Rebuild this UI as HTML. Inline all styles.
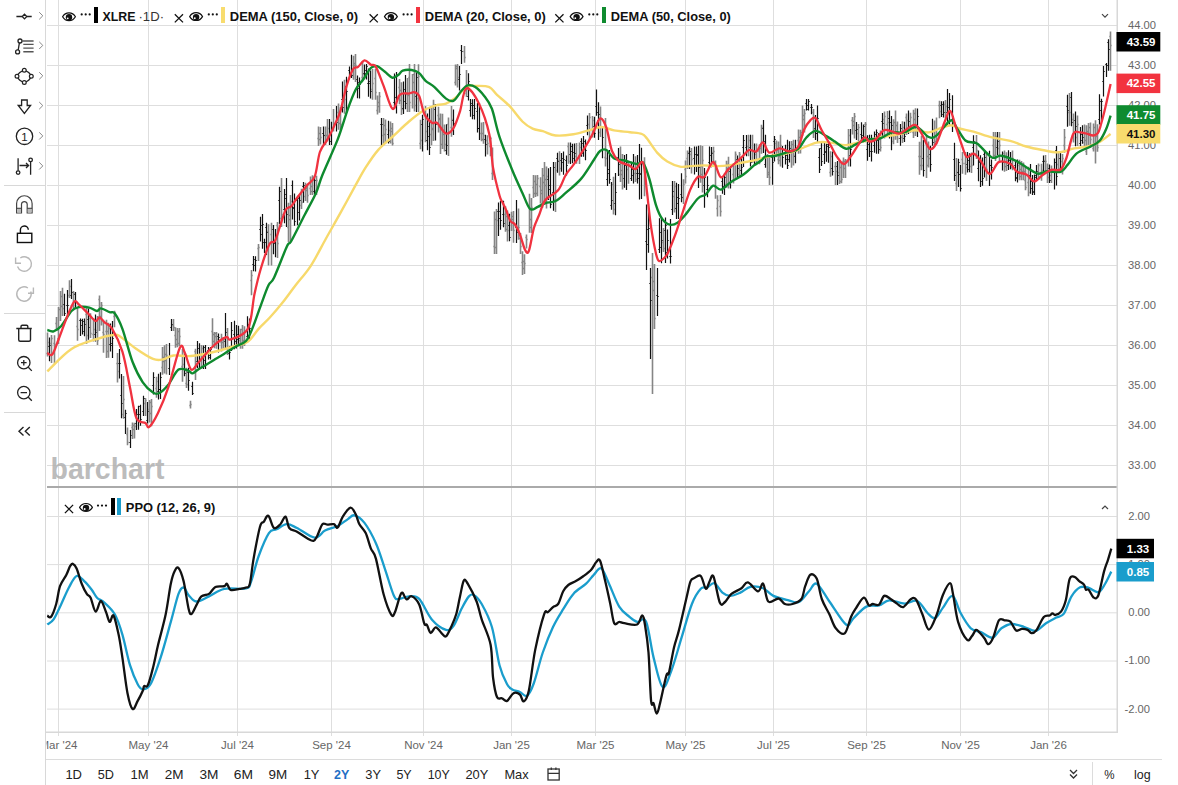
<!DOCTYPE html><html><head><meta charset="utf-8"><style>
html,body{margin:0;padding:0;background:#fff;width:1178px;height:785px;overflow:hidden;font-family:"Liberation Sans",sans-serif;}
.t{position:absolute;white-space:nowrap;}
</style></head><body>
<svg width="1178" height="785" viewBox="0 0 1178 785" style="position:absolute;left:0;top:0"><path d="M58.5,0V736M148.5,0V736M237.5,0V736M331.5,0V736M423.5,0V736M511.5,0V736M595.5,0V736M685.5,0V736M773.5,0V736M866.5,0V736M960.5,0V736M1048.5,0V736M47,25.5H1117M47,65.5H1117M47,105.5H1117M47,145.5H1117M47,185.5H1117M47,225.5H1117M47,265.5H1117M47,305.5H1117M47,345.5H1117M47,385.5H1117M47,425.5H1117M47,465.5H1117M47,516.5H1117M47,564.6H1117M47,612.8H1117M47,661.0H1117M47,709.1H1117" stroke="#dedede" stroke-width="1" fill="none"/><text x="50.5" y="478.6" font-family='"Liberation Sans", sans-serif' font-weight="bold" font-size="29" fill="#b0b0b0" fill-opacity="0.85" textLength="114" lengthAdjust="spacingAndGlyphs">barchart</text><path d="M47.5,332.4V356.6M46.3,353.5H47.5M47.5,342.5H48.7M51.5,335.0V363.1M50.3,343.5H51.5M51.5,338.5H52.7M54.5,335.2V363.6M53.3,343.5H54.5M54.5,344.5H55.7M56.5,317.0V331.0M55.3,323.5H56.5M56.5,328.5H57.7M58.5,307.0V343.9M57.3,338.5H58.5M58.5,339.5H59.7M60.5,291.0V321.0M59.3,309.5H60.5M60.5,306.5H61.7M62.5,287.8V316.0M61.3,296.5H62.5M62.5,308.5H63.7M69.5,280.3V298.0M68.3,295.5H69.5M69.5,286.5H70.7M73.5,291.0V309.5M72.3,305.5H73.5M73.5,293.5H74.7M77.5,308.0V340.7M76.3,326.5H77.5M77.5,329.5H78.7M86.5,308.0V343.9M85.3,314.5H86.5M86.5,335.5H87.7M90.5,313.3V338.0M89.3,318.5H90.5M90.5,333.5H91.7M93.5,318.5V341.6M92.3,334.5H93.5M93.5,329.5H94.7M97.5,316.0V345.0M96.3,330.5H97.5M97.5,340.5H98.7M99.5,295.5V331.0M98.3,299.5H99.5M99.5,318.5H100.7M101.5,301.9V325.6M100.3,316.5H101.5M101.5,305.5H102.7M103.5,319.7V352.7M102.3,332.5H103.5M103.5,334.5H104.7M106.5,319.8V357.9M105.3,331.5H106.5M106.5,331.5H107.7M108.5,322.8V357.7M107.3,351.5H108.5M108.5,328.5H109.7M114.5,310.7V327.3M113.3,316.5H114.5M114.5,312.5H115.7M117.5,353.1V382.4M116.3,363.5H117.5M117.5,371.5H118.7M123.5,376.0V418.7M122.3,414.5H123.5M123.5,399.5H124.7M127.5,427.6V445.3M126.3,434.5H127.5M127.5,442.5H128.7M132.5,422.5V439.0M131.3,427.5H132.5M132.5,425.5H133.7M134.5,422.7V438.6M133.3,429.5H134.5M134.5,426.5H135.7M145.5,398.1V416.0M144.3,403.5H145.5M145.5,400.5H146.7M149.5,400.0V422.5M148.3,409.5H149.5M149.5,402.5H150.7M151.5,399.0V426.3M150.3,413.5H151.5M151.5,406.5H152.7M156.5,376.8V397.7M155.3,388.5H156.5M156.5,381.5H157.7M162.5,346.9V374.8M161.3,367.5H162.5M162.5,361.5H163.7M164.5,345.3V373.5M163.3,357.5H164.5M164.5,360.5H165.7M166.5,343.9V374.4M165.3,354.5H166.5M166.5,355.5H167.7M173.5,319.0V331.0M172.3,325.5H173.5M173.5,327.5H174.7M175.5,327.3V347.7M174.3,335.5H175.5M175.5,339.5H176.7M177.5,328.1V347.2M176.3,344.5H177.5M177.5,331.5H178.7M179.5,328.0V345.9M178.3,343.5H179.5M179.5,336.5H180.7M182.5,349.0V381.7M181.3,366.5H182.5M182.5,364.5H183.7M186.5,367.8V387.9M185.3,383.5H186.5M186.5,384.5H187.7M190.5,400.8V408.5M189.3,405.5H190.5M190.5,404.5H191.7M195.5,348.8V380.0M194.3,351.5H195.5M195.5,365.5H196.7M201.5,345.0V368.6M200.3,359.5H201.5M201.5,348.5H202.7M212.5,318.2V346.2M211.3,331.5H212.5M212.5,341.5H213.7M214.5,332.0V348.3M213.3,334.5H214.5M214.5,333.5H215.7M216.5,332.0V348.8M215.3,336.5H216.5M216.5,339.5H217.7M221.5,333.7V351.5M220.3,342.5H221.5M221.5,339.5H222.7M223.5,337.0V350.0M222.3,342.5H223.5M223.5,339.5H224.7M227.5,328.0V355.0M226.3,337.5H227.5M227.5,348.5H228.7M240.5,328.7V348.8M239.3,340.5H240.5M240.5,343.5H241.7M242.5,325.0V348.7M241.3,329.5H242.5M242.5,340.5H243.7M244.5,326.3V346.0M243.3,342.5H244.5M244.5,341.5H245.7M251.5,270.0V295.3M250.3,280.5H251.5M251.5,275.5H252.7M258.5,244.0V261.0M257.3,248.5H258.5M258.5,247.5H259.7M268.5,224.2V265.5M267.3,231.5H268.5M268.5,243.5H269.7M271.5,222.8V265.5M270.3,234.5H271.5M271.5,242.5H272.7M277.5,222.0V258.0M276.3,225.5H277.5M277.5,243.5H278.7M281.5,178.0V226.9M280.3,218.5H281.5M281.5,214.5H282.7M288.5,202.7V242.1M287.3,227.5H288.5M288.5,219.5H289.7M290.5,195.0V243.0M289.3,215.5H290.5M290.5,201.5H291.7M301.5,188.8V208.9M300.3,205.5H301.5M301.5,202.5H302.7M305.5,182.7V200.9M304.3,196.5H305.5M305.5,188.5H306.7M307.5,184.2V202.8M306.3,190.5H307.5M307.5,195.5H308.7M310.5,176.5V194.9M309.3,188.5H310.5M310.5,191.5H311.7M312.5,175.3V195.0M311.3,186.5H312.5M312.5,180.5H313.7M316.5,175.8V194.9M315.3,190.5H316.5M316.5,180.5H317.7M318.5,126.5V146.0M317.3,138.5H318.5M318.5,133.5H319.7M320.5,127.0V144.4M319.3,139.5H320.5M320.5,137.5H321.7M325.5,126.6V145.0M324.3,135.5H325.5M325.5,135.5H326.7M327.5,119.0V141.3M326.3,135.5H327.5M327.5,128.5H328.7M333.5,109.0V131.6M332.3,127.5H333.5M333.5,123.5H334.7M338.5,103.6V129.8M337.3,112.5H338.5M338.5,123.5H339.7M340.5,107.3V130.0M339.3,113.5H340.5M340.5,124.5H341.7M344.5,79.8V113.8M343.3,96.5H344.5M344.5,99.5H345.7M353.5,55.8V79.8M352.3,75.5H353.5M353.5,63.5H354.7M355.5,54.0V82.0M354.3,65.5H355.5M355.5,65.5H356.7M362.5,61.0V80.6M361.3,77.5H362.5M362.5,74.5H363.7M372.5,69.1V99.8M371.3,89.5H372.5M372.5,83.5H373.7M375.5,68.7V99.8M374.3,78.5H375.5M375.5,92.5H376.7M377.5,95.4V114.4M376.3,110.5H377.5M377.5,106.5H378.7M379.5,92.0V112.8M378.3,102.5H379.5M379.5,96.5H380.7M383.5,118.0V145.3M382.3,135.5H383.5M383.5,125.5H384.7M385.5,119.5V143.4M384.3,134.5H385.5M385.5,129.5H386.7M390.5,121.5V143.6M389.3,130.5H390.5M390.5,131.5H391.7M392.5,122.9V145.4M391.3,128.5H392.5M392.5,143.5H393.7M399.5,78.9V104.3M398.3,87.5H399.5M399.5,100.5H400.7M401.5,82.3V115.0M400.3,90.5H401.5M401.5,109.5H402.7M407.5,77.9V112.0M406.3,94.5H407.5M407.5,95.5H408.7M409.5,64.0V111.9M408.3,77.5H409.5M409.5,102.5H410.7M412.5,74.0V108.5M411.3,93.5H412.5M412.5,82.5H413.7M414.5,64.1V111.5M413.3,74.5H414.5M414.5,105.5H415.7M418.5,64.3V111.9M417.3,98.5H418.5M418.5,76.5H419.7M420.5,119.7V149.3M419.3,143.5H420.5M420.5,140.5H421.7M425.5,106.0V142.2M424.3,112.5H425.5M425.5,131.5H426.7M431.5,106.2V145.3M430.3,134.5H431.5M431.5,128.5H432.7M433.5,99.8V141.0M432.3,129.5H433.5M433.5,104.5H434.7M438.5,106.7V132.4M437.3,115.5H438.5M438.5,118.5H439.7M440.5,113.4V154.1M439.3,119.5H440.5M440.5,128.5H441.7M442.5,113.8V149.0M441.3,144.5H442.5M442.5,134.5H443.7M444.5,124.6V151.6M443.3,130.5H444.5M444.5,144.5H445.7M448.5,117.5V156.0M447.3,124.5H448.5M448.5,131.5H449.7M451.5,106.0V136.7M450.3,127.5H451.5M451.5,119.5H452.7M455.5,64.4V85.4M454.3,82.5H455.5M455.5,68.5H456.7M457.5,64.0V87.5M456.3,66.5H457.5M457.5,77.5H458.7M464.5,46.1V62.8M463.3,51.5H464.5M464.5,57.5H465.7M466.5,70.0V97.1M465.3,93.5H466.5M466.5,88.5H467.7M481.5,122.4V141.2M480.3,133.5H481.5M481.5,133.5H482.7M483.5,122.0V143.7M482.3,139.5H483.5M483.5,135.5H484.7M487.5,135.2V154.5M486.3,140.5H487.5M487.5,143.5H488.7M490.5,136.7V156.2M489.3,146.5H490.5M490.5,138.5H491.7M492.5,147.5V180.0M491.3,173.5H492.5M492.5,174.5H493.7M494.5,211.4V254.0M493.3,246.5H494.5M494.5,219.5H495.7M496.5,209.0V254.0M495.3,247.5H496.5M496.5,220.5H497.7M505.5,206.3V231.7M504.3,214.5H505.5M505.5,216.5H506.7M507.5,210.6V241.5M506.3,229.5H507.5M507.5,230.5H508.7M511.5,211.7V230.9M510.3,220.5H511.5M511.5,216.5H512.7M513.5,210.9V242.8M512.3,219.5H513.5M513.5,230.5H514.7M518.5,208.6V239.8M517.3,230.5H518.5M518.5,227.5H519.7M520.5,233.0V254.0M519.3,238.5H520.5M520.5,246.5H521.7M522.5,251.3V275.0M521.3,262.5H522.5M522.5,268.5H523.7M524.5,254.2V274.1M523.3,261.5H524.5M524.5,263.5H525.7M526.5,234.5V248.5M525.3,237.5H526.5M526.5,239.5H527.7M529.5,193.8V232.7M528.3,207.5H529.5M529.5,227.5H530.7M531.5,197.9V233.0M530.3,219.5H531.5M531.5,207.5H532.7M533.5,175.1V198.0M532.3,187.5H533.5M533.5,193.5H534.7M535.5,175.3V196.9M534.3,181.5H535.5M535.5,184.5H536.7M537.5,175.0V196.2M536.3,193.5H537.5M537.5,178.5H538.7M540.5,177.3V203.4M539.3,186.5H540.5M540.5,190.5H541.7M542.5,168.0V207.8M541.3,193.5H542.5M542.5,175.5H543.7M544.5,162.0V204.8M543.3,182.5H544.5M544.5,185.5H545.7M546.5,166.6V208.5M545.3,179.5H546.5M546.5,176.5H547.7M555.5,162.1V212.0M554.3,199.5H555.5M555.5,170.5H556.7M559.5,151.3V175.4M558.3,160.5H559.5M559.5,168.5H560.7M568.5,142.5V163.7M567.3,146.5H568.5M568.5,161.5H569.7M576.5,143.1V163.8M575.3,156.5H576.5M576.5,159.5H577.7M579.5,142.5V164.0M578.3,155.5H579.5M579.5,147.5H580.7M589.5,113.0V140.0M588.3,124.5H589.5M589.5,117.5H590.7M592.5,116.1V137.5M591.3,129.5H592.5M592.5,120.5H593.7M600.5,106.6V137.0M599.3,132.5H600.5M600.5,118.5H601.7M605.5,118.0V166.6M604.3,157.5H605.5M605.5,158.5H606.7M613.5,176.8V214.5M612.3,184.5H613.5M613.5,209.5H614.7M620.5,146.6V182.0M619.3,174.5H620.5M620.5,170.5H621.7M622.5,154.0V189.5M621.3,174.5H622.5M622.5,185.5H623.7M628.5,162.2V183.8M627.3,169.5H628.5M628.5,166.5H629.7M635.5,156.2V182.0M634.3,173.5H635.5M635.5,179.5H636.7M644.5,157.2V196.2M643.3,167.5H644.5M644.5,167.5H645.7M652.5,253.0V394.0M651.3,277.5H652.5M652.5,290.5H653.7M654.5,264.0V329.0M653.3,281.5H654.5M654.5,318.5H655.7M663.5,228.0V252.1M662.3,242.5H663.5M663.5,248.5H664.7M674.5,181.0V212.6M673.3,196.5H674.5M674.5,186.5H675.7M683.5,179.2V203.9M682.3,197.5H683.5M683.5,184.5H684.7M685.5,160.6V183.5M684.3,169.5H685.5M685.5,176.5H686.7M687.5,150.6V169.1M686.3,158.5H687.5M687.5,152.5H688.7M691.5,147.9V173.5M690.3,154.5H691.5M691.5,159.5H692.7M700.5,145.3V182.7M699.3,165.5H700.5M700.5,174.5H701.7M702.5,145.9V192.4M701.3,166.5H702.5M702.5,160.5H703.7M713.5,146.8V165.6M712.3,152.5H713.5M713.5,151.5H714.7M715.5,160.6V198.8M714.3,186.5H715.5M715.5,187.5H716.7M717.5,195.2V216.6M716.3,208.5H717.5M717.5,200.5H718.7M720.5,195.0V216.6M719.3,206.5H720.5M720.5,211.5H721.7M726.5,160.8V187.7M725.3,184.5H726.5M726.5,164.5H727.7M728.5,156.7V188.6M727.3,168.5H728.5M728.5,183.5H729.7M733.5,163.3V183.4M732.3,174.5H733.5M733.5,179.5H734.7M735.5,151.6V178.4M734.3,163.5H735.5M735.5,154.5H736.7M739.5,152.0V177.5M738.3,174.5H739.5M739.5,154.5H740.7M748.5,134.7V156.2M747.3,146.5H748.5M748.5,140.5H749.7M752.5,134.7V162.7M751.3,150.5H752.5M752.5,151.5H753.7M756.5,143.6V163.1M755.3,154.5H756.5M756.5,160.5H757.7M759.5,144.2V164.2M758.3,151.5H759.5M759.5,148.5H760.7M761.5,124.7V153.8M760.3,143.5H761.5M761.5,127.5H762.7M767.5,153.9V178.0M766.3,157.5H767.5M767.5,172.5H768.7M769.5,157.3V185.0M768.3,174.5H769.5M769.5,177.5H770.7M776.5,140.5V157.2M775.3,143.5H776.5M776.5,150.5H777.7M778.5,141.4V164.3M777.3,159.5H778.5M778.5,160.5H779.7M780.5,134.7V166.5M779.3,156.5H780.5M780.5,145.5H781.7M791.5,140.9V167.8M790.3,148.5H791.5M791.5,144.5H792.7M793.5,139.8V165.4M792.3,149.5H793.5M793.5,155.5H794.7M798.5,129.6V153.8M797.3,140.5H798.5M798.5,144.5H799.7M800.5,129.8V153.4M799.3,137.5H800.5M800.5,148.5H801.7M802.5,105.4V136.0M801.3,132.5H802.5M802.5,115.5H803.7M804.5,108.9V132.5M803.3,119.5H804.5M804.5,113.5H805.7M813.5,109.1V137.9M812.3,112.5H813.5M813.5,129.5H814.7M830.5,151.2V176.7M829.3,172.5H830.5M830.5,156.5H831.7M835.5,162.1V185.0M834.3,166.5H835.5M835.5,171.5H836.7M839.5,160.0V184.1M838.3,172.5H839.5M839.5,181.5H840.7M841.5,162.3V183.2M840.3,167.5H841.5M841.5,179.5H842.7M843.5,157.6V178.0M842.3,161.5H843.5M843.5,168.5H844.7M845.5,158.9V178.0M844.3,161.5H845.5M845.5,160.5H846.7M848.5,129.0V166.5M847.3,144.5H848.5M848.5,135.5H849.7M852.5,116.9V134.4M851.3,120.5H852.5M852.5,121.5H853.7M854.5,113.0V138.5M853.3,125.5H854.5M854.5,116.5H855.7M858.5,123.9V140.9M857.3,133.5H858.5M858.5,127.5H859.7M865.5,122.0V142.3M864.3,124.5H865.5M865.5,124.5H866.7M880.5,130.4V151.5M879.3,139.5H880.5M880.5,147.5H881.7M884.5,111.4V138.5M883.3,119.5H884.5M884.5,116.5H885.7M887.5,111.0V136.1M886.3,124.5H887.5M887.5,122.5H888.7M893.5,119.2V144.3M892.3,141.5H893.5M893.5,133.5H894.7M895.5,110.6V139.7M894.3,122.5H895.5M895.5,125.5H896.7M897.5,121.5V142.9M896.3,125.5H897.5M897.5,138.5H898.7M902.5,121.3V143.1M901.3,137.5H902.5M902.5,127.5H903.7M906.5,113.5V135.0M905.3,117.5H906.5M906.5,120.5H907.7M910.5,112.8V132.8M909.3,129.5H910.5M910.5,117.5H911.7M913.5,109.8V138.0M912.3,132.5H913.5M913.5,113.5H914.7M915.5,108.3V135.9M914.3,119.5H915.5M915.5,131.5H916.7M919.5,141.8V174.8M918.3,156.5H919.5M919.5,165.5H920.7M921.5,135.7V170.2M920.3,156.5H921.5M921.5,165.5H922.7M926.5,135.0V177.9M925.3,143.5H926.5M926.5,165.5H927.7M928.5,141.4V167.5M927.3,156.5H928.5M928.5,158.5H929.7M934.5,120.4V145.1M933.3,129.5H934.5M934.5,141.5H935.7M936.5,117.5V144.5M935.3,135.5H936.5M936.5,138.5H937.7M939.5,100.8V118.2M938.3,105.5H939.5M939.5,111.5H940.7M945.5,99.9V118.0M944.3,104.5H945.5M945.5,106.5H946.7M956.5,158.0V191.1M955.3,183.5H956.5M956.5,172.5H957.7M962.5,152.1V173.7M961.3,159.5H962.5M962.5,163.5H963.7M965.5,151.9V174.8M964.3,163.5H965.5M965.5,167.5H966.7M971.5,152.5V173.0M970.3,166.5H971.5M971.5,165.5H972.7M976.5,135.0V159.0M975.3,154.5H976.5M976.5,150.5H977.7M986.5,152.9V181.0M985.3,169.5H986.5M986.5,169.5H987.7M993.5,132.0V158.0M992.3,145.5H993.5M993.5,137.5H994.7M995.5,132.1V160.9M994.3,155.5H995.5M995.5,136.5H996.7M999.5,132.0V161.0M998.3,148.5H999.5M999.5,145.5H1000.7M1004.5,150.5V171.7M1003.3,153.5H1004.5M1004.5,166.5H1005.7M1006.5,152.2V171.1M1005.3,162.5H1006.5M1006.5,160.5H1007.7M1012.5,150.5V170.3M1011.3,167.5H1012.5M1012.5,158.5H1013.7M1019.5,159.8V180.3M1018.3,165.5H1019.5M1019.5,169.5H1020.7M1021.5,161.0V180.2M1020.3,176.5H1021.5M1021.5,171.5H1022.7M1023.5,162.4V180.3M1022.3,166.5H1023.5M1023.5,171.5H1024.7M1025.5,166.8V190.3M1024.3,180.5H1025.5M1025.5,187.5H1026.7M1028.5,166.8V196.2M1027.3,182.5H1028.5M1028.5,192.5H1029.7M1038.5,163.6V179.9M1037.3,174.5H1038.5M1038.5,165.5H1039.7M1041.5,163.8V180.8M1040.3,172.5H1041.5M1041.5,170.5H1042.7M1045.5,155.0V172.3M1044.3,160.5H1045.5M1045.5,161.5H1046.7M1047.5,163.6V183.0M1046.3,172.5H1047.5M1047.5,177.5H1048.7M1051.5,165.5V183.0M1050.3,175.5H1051.5M1051.5,170.5H1052.7M1058.5,152.9V172.8M1057.3,164.5H1058.5M1058.5,168.5H1059.7M1062.5,154.0V174.4M1061.3,161.5H1062.5M1062.5,158.5H1063.7M1064.5,129.0V152.8M1063.3,145.5H1064.5M1064.5,137.5H1065.7M1069.5,92.9V125.7M1068.3,112.5H1069.5M1069.5,112.5H1070.7M1073.5,113.5V142.5M1072.3,119.5H1073.5M1073.5,132.5H1074.7M1077.5,115.4V146.0M1076.3,137.5H1077.5M1077.5,124.5H1078.7M1084.5,124.6V146.3M1083.3,142.5H1084.5M1084.5,140.5H1085.7M1086.5,125.2V155.0M1085.3,151.5H1086.5M1086.5,131.5H1087.7M1088.5,123.1V148.5M1087.3,133.5H1088.5M1088.5,133.5H1089.7M1090.5,122.4V148.0M1089.3,127.5H1090.5M1090.5,139.5H1091.7M1093.5,123.4V151.6M1092.3,148.5H1093.5M1093.5,127.5H1094.7M1095.5,120.3V163.6M1094.3,135.5H1095.5M1095.5,136.5H1096.7M1097.5,124.2V151.8M1096.3,142.5H1097.5M1097.5,147.5H1098.7M1110.5,31.5V70.8M1109.3,36.5H1110.5M1110.5,45.5H1111.7" stroke="#858585" stroke-width="1.6" fill="none"/><path d="M49.5,337.4V361.3M48.3,346.5H49.5M49.5,345.5H50.7M64.5,293.7V316.0M63.3,304.5H64.5M64.5,313.5H65.7M67.5,290.0V315.3M66.3,305.5H67.5M67.5,305.5H68.7M71.5,279.0V299.0M70.3,295.5H71.5M71.5,292.5H72.7M75.5,291.9V307.9M74.3,294.5H75.5M75.5,302.5H76.7M80.5,318.4V336.1M79.3,320.5H80.5M80.5,325.5H81.7M82.5,318.7V334.6M81.3,320.5H82.5M82.5,331.5H83.7M84.5,318.6V336.2M83.3,321.5H84.5M84.5,324.5H85.7M88.5,308.5V339.8M87.3,319.5H88.5M88.5,327.5H89.7M95.5,314.4V341.4M94.3,334.5H95.5M95.5,332.5H96.7M110.5,323.6V351.4M109.3,344.5H110.5M110.5,345.5H111.7M112.5,320.9V357.9M111.3,343.5H112.5M112.5,338.5H113.7M119.5,349.0V378.4M118.3,363.5H119.5M119.5,363.5H120.7M121.5,374.0V418.3M120.3,395.5H121.5M121.5,403.5H122.7M125.5,409.8V434.0M124.3,417.5H125.5M125.5,413.5H126.7M130.5,430.0V448.0M129.3,442.5H130.5M130.5,435.5H131.7M136.5,409.1V430.0M135.3,423.5H136.5M136.5,418.5H137.7M138.5,405.8V429.8M137.3,414.5H138.5M138.5,414.5H139.7M140.5,404.7V425.7M139.3,406.5H140.5M140.5,419.5H141.7M143.5,395.7V416.0M142.3,411.5H143.5M143.5,398.5H144.7M147.5,402.0V423.5M146.3,420.5H147.5M147.5,411.5H148.7M153.5,372.3V394.5M152.3,385.5H153.5M153.5,377.5H154.7M158.5,373.7V399.6M157.3,391.5H158.5M158.5,389.5H159.7M160.5,372.2V398.9M159.3,389.5H160.5M160.5,377.5H161.7M169.5,343.0V375.0M168.3,368.5H169.5M169.5,356.5H170.7M171.5,319.0V331.0M170.3,327.5H171.5M171.5,324.5H172.7M184.5,351.4V376.3M183.3,356.5H184.5M184.5,373.5H185.7M188.5,367.7V390.7M187.3,372.5H188.5M188.5,380.5H189.7M192.5,381.7V395.0M191.3,386.5H192.5M192.5,393.5H193.7M197.5,341.0V368.1M196.3,361.5H197.5M197.5,348.5H198.7M199.5,343.2V369.0M198.3,354.5H199.5M199.5,359.5H200.7M203.5,345.5V369.0M202.3,357.5H203.5M203.5,360.5H204.7M205.5,345.0V369.0M204.3,347.5H205.5M205.5,353.5H206.7M208.5,347.0V359.6M207.3,350.5H208.5M208.5,355.5H209.7M210.5,347.0V359.6M209.3,357.5H210.5M210.5,349.5H211.7M218.5,333.5V352.6M217.3,336.5H218.5M218.5,337.5H219.7M225.5,313.0V348.8M224.3,341.5H225.5M225.5,332.5H226.7M229.5,346.0V359.6M228.3,353.5H229.5M229.5,352.5H230.7M231.5,322.0V351.0M230.3,339.5H231.5M231.5,330.5H232.7M234.5,320.7V349.2M233.3,334.5H234.5M234.5,341.5H235.7M236.5,325.1V348.4M235.3,338.5H236.5M236.5,334.5H237.7M238.5,325.8V345.0M237.3,339.5H238.5M238.5,338.5H239.7M247.5,316.3V340.0M246.3,336.5H247.5M247.5,324.5H248.7M249.5,318.6V339.8M248.3,335.5H249.5M249.5,328.5H250.7M253.5,256.0V271.2M252.3,264.5H253.5M253.5,259.5H254.7M255.5,256.2V271.6M254.3,265.5H255.5M255.5,260.5H256.7M260.5,216.7V241.4M259.3,229.5H260.5M260.5,234.5H261.7M262.5,214.0V248.7M261.3,225.5H262.5M262.5,224.5H263.7M264.5,238.7V253.0M263.3,242.5H264.5M264.5,242.5H265.7M266.5,222.7V255.0M265.3,227.5H266.5M266.5,232.5H267.7M273.5,225.1V254.3M272.3,229.5H273.5M273.5,242.5H274.7M275.5,229.0V257.2M274.3,243.5H275.5M275.5,235.5H276.7M279.5,186.8V224.0M278.3,200.5H279.5M279.5,191.5H280.7M284.5,188.9V223.2M283.3,209.5H284.5M284.5,194.5H285.7M286.5,178.1V227.0M285.3,198.5H286.5M286.5,214.5H287.7M292.5,180.6V219.6M291.3,185.5H292.5M292.5,208.5H293.7M294.5,193.6V225.7M293.3,207.5H294.5M294.5,221.5H295.7M297.5,195.8V225.2M296.3,200.5H297.5M297.5,212.5H298.7M299.5,195.3V220.5M298.3,198.5H299.5M299.5,200.5H300.7M303.5,182.0V202.8M302.3,186.5H303.5M303.5,185.5H304.7M314.5,176.1V194.0M313.3,191.5H314.5M314.5,180.5H315.7M323.5,126.5V144.8M322.3,133.5H323.5M323.5,135.5H324.7M329.5,119.1V145.0M328.3,138.5H329.5M329.5,132.5H330.7M331.5,121.7V145.0M330.3,141.5H331.5M331.5,129.5H332.7M336.5,106.0V131.6M335.3,121.5H336.5M336.5,122.5H337.7M342.5,81.4V112.6M341.3,99.5H342.5M342.5,107.5H343.7M346.5,76.8V112.7M345.3,86.5H346.5M346.5,91.5H347.7M349.5,66.6V76.8M348.3,70.5H349.5M349.5,74.5H350.7M351.5,54.8V78.0M350.3,73.5H351.5M351.5,75.5H352.7M357.5,75.6V98.3M356.3,79.5H357.5M357.5,82.5H358.7M359.5,77.4V98.5M358.3,88.5H359.5M359.5,84.5H360.7M364.5,64.4V79.3M363.3,73.5H364.5M364.5,70.5H365.7M366.5,64.0V79.4M365.3,73.5H366.5M366.5,66.5H367.7M368.5,68.6V96.7M367.3,83.5H368.5M368.5,83.5H369.7M370.5,70.5V98.6M369.3,81.5H370.5M370.5,91.5H371.7M381.5,118.0V145.5M380.3,124.5H381.5M381.5,124.5H382.7M388.5,120.7V143.4M387.3,134.5H388.5M388.5,141.5H389.7M394.5,73.6V108.7M393.3,102.5H394.5M394.5,103.5H395.7M396.5,72.0V113.4M395.3,97.5H396.5M396.5,98.5H397.7M403.5,81.4V113.9M402.3,108.5H403.5M403.5,89.5H404.7M405.5,75.0V109.3M404.3,101.5H405.5M405.5,103.5H406.7M416.5,72.4V111.9M415.3,96.5H416.5M416.5,77.5H417.7M422.5,114.8V151.5M421.3,124.5H422.5M422.5,119.5H423.7M427.5,113.4V150.2M426.3,140.5H427.5M427.5,136.5H428.7M429.5,108.3V155.0M428.3,126.5H429.5M429.5,147.5H430.7M435.5,104.1V140.6M434.3,109.5H435.5M435.5,124.5H436.7M446.5,124.3V154.7M445.3,150.5H446.5M446.5,145.5H447.7M453.5,109.6V135.1M452.3,120.5H453.5M453.5,123.5H454.7M459.5,66.0V90.5M458.3,79.5H459.5M459.5,74.5H460.7M461.5,45.0V64.0M460.3,50.5H461.5M461.5,51.5H462.7M468.5,73.2V100.4M467.3,96.5H468.5M468.5,81.5H469.7M470.5,99.0V116.8M469.3,110.5H470.5M470.5,103.5H471.7M472.5,99.2V119.3M471.3,105.5H472.5M472.5,105.5H473.7M474.5,99.1V119.5M473.3,115.5H474.5M474.5,108.5H475.7M477.5,103.0V132.4M476.3,111.5H477.5M477.5,128.5H478.7M479.5,103.0V140.0M478.3,128.5H479.5M479.5,106.5H480.7M485.5,134.8V156.4M484.3,139.5H485.5M485.5,144.5H486.7M498.5,202.6V236.0M497.3,211.5H498.5M498.5,218.5H499.7M500.5,200.8V229.7M499.3,211.5H500.5M500.5,220.5H501.7M503.5,200.8V227.2M502.3,214.5H503.5M503.5,223.5H504.7M509.5,213.7V241.2M508.3,225.5H509.5M509.5,237.5H510.7M516.5,200.0V243.0M515.3,227.5H516.5M516.5,232.5H517.7M548.5,168.3V199.9M547.3,179.5H548.5M548.5,189.5H549.7M550.5,167.1V208.3M549.3,185.5H550.5M550.5,204.5H551.7M553.5,162.0V210.8M552.3,192.5H553.5M553.5,167.5H554.7M557.5,152.7V172.7M556.3,158.5H557.5M557.5,161.5H558.7M561.5,153.1V171.8M560.3,160.5H561.5M561.5,158.5H562.7M563.5,151.4V174.8M562.3,162.5H563.5M563.5,159.5H564.7M566.5,155.5V175.5M565.3,160.5H566.5M566.5,165.5H567.7M570.5,142.4V164.0M569.3,154.5H570.5M570.5,151.5H571.7M572.5,143.8V163.2M571.3,146.5H572.5M572.5,158.5H573.7M574.5,143.4V161.9M573.3,152.5H574.5M574.5,153.5H575.7M581.5,138.3V156.7M580.3,141.5H581.5M581.5,153.5H582.7M583.5,136.0V156.7M582.3,143.5H583.5M583.5,149.5H584.7M585.5,139.4V160.2M584.3,141.5H585.5M585.5,150.5H586.7M587.5,115.4V135.2M586.3,125.5H587.5M587.5,130.5H588.7M594.5,116.7V137.8M593.3,126.5H594.5M594.5,133.5H595.7M596.5,89.6V115.7M595.3,106.5H596.5M596.5,112.5H597.7M598.5,102.3V140.0M597.3,120.5H598.5M598.5,114.5H599.7M602.5,127.4V158.2M601.3,149.5H602.5M602.5,137.5H603.7M607.5,150.1V186.0M606.3,179.5H607.5M607.5,173.5H608.7M609.5,150.0V183.8M608.3,169.5H609.5M609.5,179.5H610.7M611.5,182.1V209.7M610.3,205.5H611.5M611.5,200.5H612.7M615.5,173.0V215.3M614.3,203.5H615.5M615.5,192.5H616.7M618.5,147.9V176.1M617.3,157.5H618.5M618.5,164.5H619.7M624.5,155.1V187.8M623.3,178.5H624.5M624.5,164.5H625.7M626.5,154.0V190.0M625.3,165.5H626.5M626.5,162.5H627.7M631.5,161.8V180.9M630.3,178.5H631.5M631.5,175.5H632.7M633.5,154.0V183.5M632.3,169.5H633.5M633.5,169.5H634.7M637.5,155.1V183.4M636.3,173.5H637.5M637.5,178.5H638.7M639.5,144.0V199.4M638.3,173.5H639.5M639.5,173.5H640.7M641.5,147.7V199.1M640.3,174.5H641.5M641.5,163.5H642.7M646.5,204.6V270.0M645.3,241.5H646.5M646.5,229.5H647.7M648.5,204.0V252.7M647.3,244.5H648.5M648.5,228.5H649.7M650.5,268.0V359.0M649.3,283.5H650.5M650.5,300.5H651.7M657.5,268.0V316.0M656.3,295.5H657.5M657.5,296.5H658.7M659.5,218.2V253.0M658.3,249.5H659.5M659.5,232.5H660.7M661.5,217.7V263.3M660.3,247.5H661.5M661.5,240.5H662.7M665.5,217.6V263.0M664.3,230.5H665.5M665.5,225.5H666.7M667.5,229.4V258.6M666.3,252.5H667.5M667.5,240.5H668.7M670.5,219.1V263.4M669.3,256.5H670.5M670.5,256.5H671.7M672.5,181.1V214.9M671.3,209.5H672.5M672.5,191.5H673.7M676.5,182.8V219.0M675.3,208.5H676.5M676.5,203.5H677.7M678.5,184.0V219.0M677.3,197.5H678.5M678.5,198.5H679.7M681.5,173.3V202.3M680.3,194.5H681.5M681.5,197.5H682.7M689.5,146.7V169.0M688.3,153.5H689.5M689.5,151.5H690.7M694.5,146.6V174.6M693.3,158.5H694.5M694.5,154.5H695.7M696.5,146.6V172.1M695.3,165.5H696.5M696.5,154.5H697.7M698.5,145.8V188.1M697.3,155.5H698.5M698.5,167.5H699.7M704.5,168.0V207.7M703.3,185.5H704.5M704.5,177.5H705.7M707.5,176.2V197.3M706.3,189.5H707.5M707.5,185.5H708.7M709.5,146.6V168.0M708.3,162.5H709.5M709.5,164.5H710.7M711.5,147.1V167.3M710.3,155.5H711.5M711.5,153.5H712.7M722.5,176.1V193.8M721.3,181.5H722.5M722.5,186.5H723.7M724.5,173.3V195.0M723.3,188.5H724.5M724.5,177.5H725.7M730.5,163.9V188.5M729.3,171.5H730.5M730.5,182.5H731.7M737.5,155.5V178.1M736.3,159.5H737.5M737.5,168.5H738.7M741.5,156.4V175.0M740.3,170.5H741.5M741.5,167.5H742.7M743.5,135.0V167.0M742.3,147.5H743.5M743.5,140.5H744.7M746.5,134.9V156.3M745.3,147.5H746.5M746.5,150.5H747.7M750.5,134.7V166.5M749.3,147.5H750.5M750.5,162.5H751.7M754.5,143.6V165.0M753.3,151.5H754.5M754.5,152.5H755.7M763.5,120.0V153.1M762.3,128.5H763.5M763.5,141.5H764.7M765.5,134.7V167.8M764.3,164.5H765.5M765.5,150.5H766.7M772.5,153.8V184.8M771.3,157.5H772.5M772.5,162.5H773.7M774.5,136.0V161.4M773.3,141.5H774.5M774.5,139.5H775.7M782.5,146.0V167.8M781.3,154.5H782.5M782.5,157.5H783.7M785.5,144.8V164.6M784.3,154.5H785.5M785.5,159.5H786.7M787.5,139.8V169.0M786.3,155.5H787.5M787.5,165.5H788.7M789.5,141.3V162.6M788.3,159.5H789.5M789.5,148.5H790.7M795.5,139.8V163.3M794.3,156.5H795.5M795.5,151.5H796.7M806.5,99.0V110.5M805.3,103.5H806.5M806.5,109.5H807.7M808.5,99.0V110.5M807.3,105.5H808.5M808.5,101.5H809.7M811.5,104.0V114.3M810.3,107.5H811.5M811.5,107.5H812.7M815.5,114.9V140.0M814.3,128.5H815.5M815.5,133.5H816.7M817.5,105.4V142.3M816.3,133.5H817.5M817.5,118.5H818.7M819.5,148.2V172.9M818.3,157.5H819.5M819.5,169.5H820.7M821.5,141.0V165.9M820.3,148.5H821.5M821.5,161.5H822.7M824.5,141.6V164.0M823.3,154.5H824.5M824.5,151.5H825.7M826.5,143.8V161.7M825.3,152.5H826.5M826.5,146.5H827.7M828.5,141.0V162.8M827.3,144.5H828.5M828.5,147.5H829.7M832.5,151.6V175.4M831.3,168.5H832.5M832.5,171.5H833.7M837.5,161.0V184.9M836.3,166.5H837.5M837.5,175.5H838.7M850.5,129.0V166.4M849.3,155.5H850.5M850.5,149.5H851.7M856.5,122.1V139.9M855.3,130.5H856.5M856.5,129.5H857.7M861.5,122.3V141.9M860.3,134.5H861.5M861.5,137.5H862.7M863.5,124.4V142.3M862.3,135.5H863.5M863.5,126.5H864.7M867.5,135.3V160.8M866.3,149.5H867.5M867.5,141.5H868.7M869.5,134.7V157.1M868.3,144.5H869.5M869.5,141.5H870.7M871.5,134.7V161.4M870.3,151.5H871.5M871.5,151.5H872.7M874.5,131.5V152.7M873.3,145.5H874.5M874.5,134.5H875.7M876.5,129.6V153.7M875.3,139.5H876.5M876.5,132.5H877.7M878.5,133.2V153.8M877.3,140.5H878.5M878.5,149.5H879.7M882.5,112.9V137.1M881.3,121.5H882.5M882.5,123.5H883.7M889.5,110.5V138.5M888.3,118.5H889.5M889.5,122.5H890.7M891.5,116.0V150.3M890.3,132.5H891.5M891.5,125.5H892.7M900.5,124.1V145.7M899.3,138.5H900.5M900.5,128.5H901.7M904.5,121.7V142.0M903.3,138.5H904.5M904.5,136.5H905.7M908.5,110.6V133.9M907.3,128.5H908.5M908.5,121.5H909.7M917.5,108.5V137.0M916.3,125.5H917.5M917.5,116.5H918.7M923.5,140.1V176.6M922.3,158.5H923.5M923.5,170.5H924.7M930.5,145.7V171.7M929.3,154.5H930.5M930.5,164.5H931.7M932.5,118.7V145.7M931.3,137.5H932.5M932.5,142.5H933.7M941.5,101.3V117.0M940.3,105.5H941.5M941.5,114.5H942.7M943.5,101.3V117.4M942.3,104.5H943.5M943.5,112.5H944.7M947.5,89.0V125.8M946.3,112.5H947.5M947.5,107.5H948.7M949.5,93.1V124.8M948.3,113.5H949.5M949.5,99.5H950.7M952.5,95.2V132.0M951.3,119.5H952.5M952.5,116.5H953.7M954.5,142.7V181.0M953.3,159.5H954.5M954.5,175.5H955.7M958.5,158.8V186.9M957.3,172.5H958.5M958.5,162.5H959.7M960.5,165.0V191.6M959.3,174.5H960.5M960.5,188.5H961.7M967.5,151.9V172.4M966.3,164.5H967.5M967.5,169.5H968.7M969.5,153.2V172.2M968.3,160.5H969.5M969.5,156.5H970.7M973.5,135.2V165.6M972.3,147.5H973.5M973.5,141.5H974.7M978.5,150.6V181.2M977.3,168.5H978.5M978.5,162.5H979.7M980.5,155.3V187.0M979.3,161.5H980.5M980.5,181.5H981.7M982.5,157.6V185.8M981.3,162.5H982.5M982.5,178.5H983.7M984.5,150.3V177.5M983.3,154.5H984.5M984.5,157.5H985.7M989.5,150.8V186.0M988.3,172.5H989.5M989.5,165.5H990.7M991.5,159.5V179.5M990.3,165.5H991.5M991.5,167.5H992.7M997.5,132.0V155.1M996.3,147.5H997.5M997.5,141.5H998.7M1002.5,151.5V170.5M1001.3,161.5H1002.5M1002.5,162.5H1003.7M1008.5,150.3V170.0M1007.3,165.5H1008.5M1008.5,160.5H1009.7M1010.5,151.9V169.3M1009.3,163.5H1010.5M1010.5,163.5H1011.7M1015.5,159.9V181.3M1014.3,165.5H1015.5M1015.5,178.5H1016.7M1017.5,159.5V182.4M1016.3,177.5H1017.5M1017.5,173.5H1018.7M1030.5,164.0V193.7M1029.3,175.5H1030.5M1030.5,181.5H1031.7M1032.5,175.1V195.0M1031.3,188.5H1032.5M1032.5,192.5H1033.7M1034.5,174.4V195.0M1033.3,191.5H1034.5M1034.5,177.5H1035.7M1036.5,165.0V181.0M1035.3,175.5H1036.5M1036.5,171.5H1037.7M1043.5,155.5V171.3M1042.3,161.5H1043.5M1043.5,161.5H1044.7M1049.5,164.4V183.0M1048.3,168.5H1049.5M1049.5,180.5H1050.7M1054.5,158.4V189.6M1053.3,172.5H1054.5M1054.5,162.5H1055.7M1056.5,146.0V185.4M1055.3,150.5H1056.5M1056.5,176.5H1057.7M1060.5,152.8V172.6M1059.3,158.5H1060.5M1060.5,169.5H1061.7M1067.5,94.8V126.8M1066.3,106.5H1067.5M1067.5,110.5H1068.7M1071.5,92.0V126.3M1070.3,97.5H1071.5M1071.5,122.5H1072.7M1075.5,111.6V146.3M1074.3,120.5H1075.5M1075.5,126.5H1076.7M1080.5,126.9V146.1M1079.3,143.5H1080.5M1080.5,134.5H1081.7M1082.5,125.3V143.8M1081.3,140.5H1082.5M1082.5,137.5H1083.7M1099.5,94.3V124.6M1098.3,119.5H1099.5M1099.5,110.5H1100.7M1101.5,98.8V121.2M1100.3,101.5H1101.5M1101.5,101.5H1102.7M1103.5,66.0V96.5M1102.3,81.5H1103.5M1103.5,71.5H1104.7M1106.5,63.0V77.0M1105.3,64.5H1106.5M1106.5,65.5H1107.7M1108.5,39.3V70.8M1107.3,42.5H1108.5M1108.5,49.5H1109.7" stroke="#111" stroke-width="1.2" fill="none"/><path d="M47.3,371.3 C51.3,367.6 63.2,354.4 71.5,349.0 C79.8,343.6 90.0,341.3 97.0,339.0 C104.0,336.7 109.7,335.4 113.5,335.0 C117.3,334.6 116.4,334.2 120.0,336.4 C123.6,338.6 129.5,344.2 135.0,348.0 C140.5,351.8 148.3,357.0 153.0,358.9 C157.7,360.8 159.6,360.0 163.0,359.4 C166.4,358.8 168.7,356.1 173.4,355.5 C178.1,354.9 184.6,356.5 191.0,356.0 C197.4,355.5 204.3,354.2 211.6,352.5 C218.9,350.8 228.9,347.8 235.0,346.0 C241.1,344.2 244.0,344.5 248.0,341.6 C252.0,338.7 255.2,332.6 258.8,328.6 C262.4,324.6 265.6,322.1 269.6,317.8 C273.6,313.5 278.3,308.0 282.6,302.6 C286.9,297.2 290.9,291.4 295.6,285.3 C300.3,279.2 305.7,273.6 310.8,265.8 C315.9,258.0 321.1,247.3 326.0,238.5 C330.9,229.7 335.4,222.1 340.3,213.2 C345.2,204.3 351.4,192.8 355.6,185.2 C359.8,177.6 361.9,173.3 365.7,167.4 C369.5,161.5 373.8,154.9 378.5,149.6 C383.2,144.3 388.7,140.2 393.8,135.5 C398.9,130.8 403.9,125.8 409.0,121.5 C414.1,117.2 419.6,112.8 424.3,110.0 C429.0,107.2 433.4,106.0 437.0,105.0 C440.6,104.0 442.8,105.0 446.0,103.7 C449.2,102.4 452.8,100.1 456.2,97.3 C459.6,94.5 463.0,89.0 466.4,87.1 C469.8,85.2 472.8,85.9 476.6,85.9 C480.4,85.9 485.9,85.6 489.3,87.1 C492.7,88.6 493.6,91.6 497.0,94.8 C500.4,98.0 505.5,101.8 509.7,106.2 C513.9,110.7 518.6,117.8 522.4,121.5 C526.2,125.2 529.2,127.1 532.6,128.7 C536.0,130.3 539.0,130.1 542.8,131.2 C546.6,132.3 550.5,135.0 555.6,135.5 C560.7,136.0 567.9,135.2 573.4,134.3 C578.9,133.5 584.0,131.6 588.7,130.4 C593.4,129.2 597.2,127.0 601.4,127.0 C605.6,127.0 609.2,129.5 614.0,130.4 C618.8,131.3 625.4,131.6 630.0,132.2 C634.6,132.8 639.1,132.9 641.9,134.0 C644.7,135.1 644.5,135.5 647.0,138.6 C649.5,141.7 653.7,148.8 657.1,152.6 C660.5,156.4 663.5,159.2 667.3,161.5 C671.1,163.8 676.2,165.8 680.0,166.6 C683.8,167.4 686.5,166.3 690.3,166.1 C694.1,165.9 698.3,165.4 703.0,165.4 C707.7,165.4 714.0,166.1 718.3,166.1 C722.5,166.1 724.7,165.9 728.5,165.4 C732.3,164.9 737.0,163.7 741.2,162.8 C745.5,162.0 750.2,161.2 754.0,160.3 C757.8,159.5 760.8,158.5 764.2,157.7 C767.6,156.8 770.7,155.9 774.3,155.2 C777.9,154.5 782.0,154.4 786.0,153.5 C790.0,152.6 793.1,151.5 798.2,149.7 C803.3,147.9 811.2,143.8 816.6,142.6 C822.0,141.4 826.0,142.2 830.8,142.6 C835.5,143.0 840.7,145.2 845.1,145.2 C849.5,145.2 853.6,143.4 857.3,142.6 C861.0,141.8 863.4,141.4 867.5,140.5 C871.6,139.6 876.7,138.0 881.8,137.0 C886.9,136.0 892.7,135.5 898.1,134.4 C903.5,133.3 909.3,130.6 914.4,130.3 C919.5,130.0 924.3,132.8 928.7,132.4 C933.1,132.0 937.2,129.2 940.9,128.0 C944.6,126.8 948.0,125.2 951.1,125.3 C954.2,125.4 955.6,127.5 959.3,128.5 C963.0,129.6 968.1,130.1 973.5,131.6 C978.9,133.1 985.8,135.9 991.9,137.4 C998.0,138.9 1004.5,139.3 1010.2,140.8 C1015.9,142.3 1020.9,145.0 1026.3,146.5 C1031.6,148.0 1036.9,149.0 1042.3,150.0 C1047.7,151.0 1053.1,152.6 1058.4,152.3 C1063.8,152.0 1069.4,149.4 1074.4,148.4 C1079.4,147.4 1084.0,147.6 1088.2,146.5 C1092.4,145.4 1095.9,144.1 1099.6,142.0 C1103.3,139.9 1108.8,135.3 1110.6,134.0" stroke="#f7d96b" stroke-width="2.4" fill="none" stroke-linejoin="round"/><path d="M47.3,330.0 C48.3,330.2 51.3,332.0 53.6,331.3 C55.9,330.6 58.3,329.4 61.3,326.0 C64.3,322.6 68.5,314.2 71.5,311.0 C74.5,307.8 76.0,307.6 79.0,307.0 C82.0,306.4 86.3,306.9 89.3,307.6 C92.3,308.3 95.1,310.9 97.0,311.0 C98.9,311.1 98.7,308.2 100.8,308.4 C102.9,308.6 107.4,311.3 109.7,312.2 C112.0,313.1 112.7,310.7 114.8,313.5 C116.9,316.3 119.4,320.7 122.4,328.8 C125.4,336.9 129.2,353.1 132.6,362.0 C136.0,370.9 139.4,377.2 142.8,382.3 C146.2,387.4 150.2,390.7 153.0,392.5 C155.8,394.3 156.8,394.3 159.4,393.0 C162.0,391.7 165.1,388.7 168.3,384.8 C171.5,380.9 175.1,371.9 178.5,369.6 C181.9,367.3 186.4,370.2 188.7,370.8 C191.0,371.4 190.8,373.7 192.5,373.4 C194.2,373.1 195.3,371.2 198.9,369.0 C202.5,366.8 209.8,362.5 214.0,360.0 C218.2,357.5 220.5,356.2 224.0,354.0 C227.5,351.8 231.3,349.2 235.0,347.0 C238.7,344.8 243.1,344.1 246.0,341.0 C248.9,337.9 249.8,334.6 252.3,328.6 C254.8,322.6 258.3,312.0 261.0,304.8 C263.7,297.6 266.3,289.8 268.5,285.3 C270.7,280.8 270.9,284.2 274.0,277.7 C277.1,271.2 284.1,252.4 287.0,246.3 C289.9,240.2 288.4,246.2 291.3,241.0 C294.2,235.8 300.5,223.0 304.6,215.0 C308.7,207.0 313.0,199.6 316.0,192.9 C319.0,186.2 318.8,183.9 322.4,175.0 C326.0,166.1 333.4,150.4 337.7,139.4 C341.9,128.4 344.9,117.1 347.9,108.8 C350.9,100.5 353.1,94.6 355.6,89.7 C358.2,84.8 360.7,83.1 363.2,79.5 C365.7,75.9 368.5,70.2 370.8,68.0 C373.1,65.8 374.9,65.6 377.2,66.2 C379.5,66.8 382.3,69.9 384.9,71.8 C387.4,73.7 390.2,77.3 392.5,77.7 C394.8,78.1 397.2,75.6 398.9,74.4 C400.6,73.2 400.6,71.3 402.7,70.6 C404.8,69.9 408.9,69.6 411.6,70.0 C414.4,70.4 416.9,71.3 419.2,73.1 C421.5,74.9 423.1,78.5 425.6,80.8 C428.2,83.1 431.1,84.1 434.5,87.1 C437.9,90.1 442.8,96.3 446.0,98.6 C449.2,100.8 451.1,101.9 453.6,100.6 C456.2,99.3 459.0,93.5 461.3,91.0 C463.6,88.5 465.4,86.1 467.7,85.4 C470.0,84.8 472.6,85.3 475.3,87.1 C478.1,88.9 481.4,92.4 484.2,96.0 C487.0,99.6 489.3,102.0 491.9,108.8 C494.4,115.6 496.1,126.6 499.5,136.8 C502.9,147.0 508.4,160.7 512.2,170.0 C516.0,179.3 519.4,186.4 522.4,192.9 C525.4,199.4 527.5,206.6 530.0,208.9 C532.5,211.2 535.1,207.9 537.7,206.9 C540.3,205.9 542.4,204.0 545.4,203.0 C548.4,202.0 552.2,202.7 555.6,201.0 C559.0,199.3 561.5,196.6 565.7,192.9 C569.9,189.2 576.3,184.4 581.0,178.9 C585.7,173.4 590.6,164.7 593.8,160.0 C597.0,155.3 598.0,152.7 600.1,151.0 C602.2,149.3 604.1,148.8 606.5,150.0 C608.9,151.2 611.2,156.8 614.2,158.5 C617.2,160.2 620.5,159.6 624.3,160.5 C628.1,161.4 633.7,163.6 636.8,164.0 C639.9,164.4 641.0,160.2 643.1,162.8 C645.2,165.4 647.4,172.4 649.5,179.4 C651.6,186.4 653.8,198.2 655.9,204.8 C658.0,211.4 659.9,215.6 662.2,218.9 C664.5,222.2 667.4,224.1 669.9,224.7 C672.4,225.3 675.0,224.3 677.5,222.7 C680.0,221.1 681.8,219.0 685.2,215.0 C688.6,211.0 694.5,201.9 697.9,198.5 C701.3,195.1 703.0,196.7 705.6,194.6 C708.2,192.5 710.7,186.5 713.2,185.7 C715.7,184.9 717.8,190.2 720.8,189.6 C723.8,189.0 727.2,184.4 731.0,181.9 C734.8,179.4 740.0,177.1 743.8,174.3 C747.6,171.6 751.0,167.7 754.0,165.4 C757.0,163.1 759.7,161.8 761.6,160.3 C763.5,158.8 763.3,157.1 765.4,156.4 C767.5,155.7 770.9,156.6 774.3,156.0 C777.7,155.4 782.0,153.9 786.0,152.7 C790.0,151.5 794.8,151.2 798.2,148.7 C801.6,146.2 803.5,140.5 806.4,137.5 C809.3,134.5 812.2,131.1 815.6,130.9 C819.0,130.7 823.6,134.6 826.8,136.4 C830.0,138.2 831.7,139.4 834.9,141.5 C838.1,143.6 842.7,148.2 846.1,148.7 C849.5,149.2 851.7,146.1 855.3,144.6 C858.9,143.1 863.4,140.5 867.5,139.5 C871.6,138.5 875.7,139.7 879.8,138.5 C883.9,137.3 887.9,133.4 892.0,132.4 C896.1,131.4 900.1,133.3 904.2,132.4 C908.3,131.5 912.4,126.1 916.5,126.9 C920.6,127.7 925.3,135.6 928.7,137.0 C932.1,138.4 933.1,138.2 936.8,135.4 C940.4,132.7 947.1,121.5 950.6,120.5 C954.1,119.5 955.0,126.0 957.5,129.3 C960.0,132.6 962.7,138.3 965.4,140.5 C968.1,142.7 971.4,142.0 973.5,142.6 C975.6,143.2 975.0,141.7 978.1,144.2 C981.2,146.7 988.1,155.6 991.9,157.5 C995.7,159.4 997.2,155.2 1001.0,155.7 C1004.8,156.2 1010.6,158.4 1014.8,160.3 C1019.0,162.2 1022.5,165.0 1026.3,167.2 C1030.1,169.4 1034.3,172.9 1037.7,173.6 C1041.1,174.3 1043.1,171.6 1046.9,171.3 C1050.7,171.0 1057.3,172.9 1060.7,171.8 C1064.1,170.7 1064.8,168.0 1067.5,164.9 C1070.2,161.8 1072.9,156.5 1076.7,153.4 C1080.5,150.3 1086.7,148.6 1090.5,146.5 C1094.3,144.4 1096.9,143.9 1099.6,140.8 C1102.3,137.8 1104.7,132.4 1106.5,128.2 C1108.3,124.0 1109.9,117.7 1110.6,115.6" stroke="#0e8a2e" stroke-width="2.4" fill="none" stroke-linejoin="round"/><path d="M47.3,353.0 C48.1,353.2 50.5,356.6 52.4,354.3 C54.3,352.0 56.4,344.9 58.7,339.0 C61.0,333.1 63.9,324.8 66.4,318.6 C69.0,312.4 71.9,304.3 74.0,302.0 C76.1,299.7 76.7,302.7 79.0,304.6 C81.3,306.5 85.2,310.8 88.0,313.5 C90.8,316.2 93.8,320.4 95.7,321.0 C97.6,321.6 98.0,317.1 99.5,317.3 C101.0,317.5 102.5,320.5 104.6,322.4 C106.7,324.3 109.2,323.9 112.2,328.8 C115.2,333.7 119.4,341.9 122.4,351.7 C125.4,361.5 127.7,376.3 130.0,387.4 C132.3,398.4 133.8,412.1 136.4,418.0 C139.0,423.9 143.3,421.5 145.4,423.0 C147.5,424.5 147.1,428.6 149.2,426.9 C151.3,425.2 154.8,419.5 158.0,412.9 C161.2,406.3 164.7,398.2 168.3,387.4 C171.9,376.6 177.0,353.6 179.8,347.9 C182.6,342.2 183.0,349.4 184.9,353.0 C186.8,356.6 188.9,368.1 191.2,369.6 C193.5,371.1 195.2,365.9 198.9,362.0 C202.6,358.1 208.7,350.1 213.3,346.0 C217.9,341.9 223.4,338.3 226.3,337.2 C229.2,336.1 227.0,340.8 230.6,339.4 C234.2,338.0 244.0,336.2 248.0,328.6 C252.0,321.0 252.3,304.1 254.5,294.0 C256.7,283.9 258.5,276.3 261.0,268.0 C263.5,259.7 267.3,248.6 269.6,244.1 C271.9,239.6 273.2,244.2 275.0,240.9 C276.8,237.7 278.7,229.8 280.5,224.6 C282.3,219.4 284.1,212.6 285.9,209.5 C287.7,206.4 289.4,208.1 291.3,206.2 C293.2,204.3 294.4,201.5 297.0,198.0 C299.6,194.5 304.1,188.8 307.1,185.2 C310.1,181.6 312.7,181.8 314.8,176.3 C316.9,170.8 317.8,158.2 319.9,152.0 C322.0,145.8 325.2,143.6 327.5,139.4 C329.8,135.2 331.8,131.3 333.9,126.6 C336.0,121.9 338.2,118.1 340.3,111.3 C342.4,104.5 344.5,92.9 346.6,85.9 C348.7,78.9 351.1,72.5 353.0,69.3 C354.9,66.1 356.2,68.3 358.1,66.8 C360.0,65.3 362.4,60.8 364.5,60.4 C366.6,60.0 368.9,63.6 370.8,64.7 C372.7,65.8 373.8,63.3 375.9,66.8 C378.0,70.3 380.8,78.9 383.6,85.9 C386.4,92.9 389.9,107.1 392.5,108.8 C395.1,110.5 397.2,98.5 398.9,96.0 C400.6,93.5 401.0,93.9 402.7,93.5 C404.4,93.1 407.1,93.7 409.0,93.5 C410.9,93.3 412.5,91.8 414.2,92.2 C415.9,92.6 417.5,92.4 419.2,96.0 C420.9,99.6 422.2,109.4 424.3,113.9 C426.4,118.4 429.9,121.3 432.0,122.8 C434.1,124.3 434.7,121.0 437.0,122.8 C439.3,124.6 443.2,132.7 446.0,133.5 C448.8,134.3 451.3,131.6 453.6,127.9 C455.9,124.2 457.9,117.9 460.0,111.3 C462.1,104.7 463.2,89.7 466.4,88.4 C469.6,87.1 475.2,96.0 479.0,103.7 C482.8,111.4 487.0,123.7 489.3,134.3 C491.6,144.9 491.3,157.2 493.0,167.4 C494.7,177.6 497.9,189.6 499.5,195.5 C501.1,201.4 501.4,200.0 502.6,202.6 C503.8,205.2 505.2,207.9 506.5,211.0 C507.8,214.1 508.9,218.8 510.3,221.0 C511.7,223.2 513.2,222.0 514.8,224.2 C516.4,226.4 518.2,230.2 519.9,234.4 C521.6,238.7 523.5,246.9 525.0,249.7 C526.5,252.5 527.3,254.6 528.8,251.0 C530.3,247.4 532.2,233.9 533.9,228.0 C535.6,222.1 537.1,220.0 539.0,215.3 C540.9,210.6 542.2,204.2 545.4,200.0 C548.6,195.8 554.7,194.5 558.1,190.3 C561.5,186.1 563.2,179.2 565.7,175.0 C568.2,170.8 570.4,169.0 573.4,164.8 C576.4,160.6 580.4,154.7 583.6,149.6 C586.8,144.5 589.8,139.5 592.5,134.3 C595.2,129.1 597.7,119.6 600.0,118.5 C602.3,117.4 604.3,122.1 606.3,127.5 C608.3,132.9 609.9,145.4 612.0,151.0 C614.1,156.6 616.0,158.6 618.9,161.0 C621.8,163.4 626.3,164.0 629.1,165.4 C631.9,166.8 633.2,169.6 635.5,169.2 C637.8,168.8 641.2,159.0 643.1,162.8 C645.0,166.6 645.7,181.7 647.0,192.1 C648.3,202.5 649.3,215.0 650.8,225.2 C652.3,235.4 654.5,247.2 655.9,253.2 C657.3,259.2 657.5,260.3 659.0,261.0 C660.5,261.7 663.5,258.8 665.0,257.3 C666.5,255.8 666.5,255.8 668.2,252.2 C669.9,248.5 672.6,242.0 675.0,235.4 C677.4,228.8 680.1,220.1 682.6,212.5 C685.1,204.9 687.8,195.5 690.3,189.6 C692.8,183.7 695.6,178.9 697.9,176.8 C700.2,174.7 701.8,179.3 704.3,176.8 C706.8,174.3 710.5,161.9 713.2,162.0 C716.0,162.1 718.2,176.1 720.8,177.3 C723.3,178.5 725.1,172.5 728.5,169.2 C731.9,165.9 737.8,160.9 741.2,157.7 C744.6,154.5 746.4,151.1 748.9,150.0 C751.4,148.9 754.2,152.6 756.5,151.3 C758.8,150.0 760.8,142.2 762.9,142.4 C765.0,142.6 766.5,151.6 769.2,152.6 C772.0,153.6 776.0,148.5 779.4,148.3 C782.8,148.1 786.5,151.6 789.6,151.3 C792.7,151.0 795.8,150.3 798.2,146.6 C800.7,142.9 802.2,133.7 804.3,129.3 C806.3,124.9 808.6,122.0 810.5,120.1 C812.4,118.2 813.7,116.4 815.6,118.1 C817.5,119.8 819.2,125.7 821.7,130.3 C824.2,134.9 828.2,141.2 830.8,145.6 C833.3,150.0 834.8,153.7 837.0,156.8 C839.2,159.9 841.7,164.2 844.1,164.0 C846.5,163.8 848.8,159.0 851.2,155.8 C853.6,152.6 856.2,147.7 858.4,144.6 C860.6,141.5 862.6,138.0 864.5,137.5 C866.4,137.0 867.7,141.2 869.6,141.5 C871.5,141.8 873.3,141.4 875.7,139.5 C878.1,137.6 881.1,131.7 883.8,130.3 C886.5,128.9 889.3,130.8 892.0,131.3 C894.7,131.8 896.4,134.5 900.1,133.4 C903.8,132.3 910.8,124.8 914.4,124.8 C918.0,124.8 919.0,129.4 921.5,133.4 C924.0,137.4 927.2,147.2 929.7,148.7 C932.2,150.2 934.2,147.2 936.8,142.6 C939.3,138.0 942.8,126.3 945.0,121.0 C947.2,115.7 948.5,110.0 950.3,111.0 C952.1,112.0 954.0,121.3 955.8,126.7 C957.6,132.1 959.5,138.6 961.3,143.6 C963.1,148.6 964.6,155.1 966.6,156.8 C968.6,158.5 971.2,153.0 973.5,153.6 C975.8,154.2 977.7,156.9 980.4,160.3 C983.1,163.7 986.5,173.7 989.6,174.0 C992.7,174.3 995.3,163.8 998.7,162.1 C1002.1,160.4 1007.1,162.1 1010.2,163.7 C1013.3,165.3 1014.4,170.0 1017.1,171.8 C1019.8,173.6 1023.4,172.9 1026.3,174.5 C1029.2,176.1 1031.6,181.3 1034.3,181.4 C1037.0,181.5 1039.4,177.1 1042.3,175.2 C1045.2,173.3 1048.4,170.8 1051.5,169.9 C1054.6,169.0 1058.2,171.5 1060.7,169.5 C1063.2,167.5 1064.3,163.9 1066.4,158.0 C1068.5,152.1 1071.0,138.2 1073.3,133.9 C1075.6,129.6 1077.9,132.5 1080.0,132.4 C1082.1,132.3 1083.8,133.0 1086.0,133.5 C1088.2,134.0 1091.3,135.6 1093.3,135.5 C1095.3,135.4 1096.7,134.5 1097.9,133.0 C1099.1,131.5 1099.3,130.0 1100.4,126.3 C1101.5,122.6 1102.8,118.0 1104.5,111.0 C1106.2,104.0 1109.6,88.5 1110.6,84.0" stroke="#f0323f" stroke-width="2.3" fill="none" stroke-linejoin="round"/><path d="M47.3,624.5 C48.3,623.6 51.3,622.8 53.6,619.4 C55.9,616.0 58.8,609.3 61.3,604.0 C63.8,598.7 66.4,592.2 68.9,587.5 C71.5,582.8 74.0,577.1 76.6,576.0 C79.1,574.9 81.7,578.8 84.2,581.1 C86.8,583.4 89.8,587.2 91.9,590.0 C94.0,592.8 94.9,595.6 97.0,597.7 C99.1,599.8 101.6,600.0 104.6,602.8 C107.6,605.6 111.8,609.0 114.8,614.3 C117.8,619.6 119.9,626.1 122.4,634.6 C124.9,643.1 127.5,656.9 130.0,665.2 C132.6,673.5 135.6,680.3 137.7,684.3 C139.8,688.3 140.7,689.4 142.8,689.4 C144.9,689.4 147.5,689.6 150.5,684.3 C153.5,679.0 157.2,668.0 160.6,657.6 C164.0,647.2 167.8,632.5 170.8,621.9 C173.8,611.3 176.4,599.6 178.5,593.9 C180.6,588.2 181.9,587.3 183.6,587.5 C185.3,587.7 186.6,592.9 188.7,595.2 C190.8,597.5 192.9,601.3 196.3,601.5 C199.7,601.7 204.3,598.5 209.0,596.4 C213.7,594.3 218.1,590.1 224.3,588.8 C230.5,587.5 241.5,589.7 246.0,588.5 C250.5,587.3 249.0,586.9 251.1,581.5 C253.2,576.1 255.7,564.1 258.7,556.0 C261.7,547.9 265.9,537.6 268.9,533.1 C271.9,528.6 273.6,530.8 276.6,529.3 C279.6,527.8 283.4,524.4 286.8,524.2 C290.2,524.0 292.3,525.8 297.0,528.0 C301.7,530.2 310.1,537.3 314.8,537.7 C319.5,538.1 321.2,532.6 325.0,530.6 C328.8,528.6 333.9,527.9 337.7,526.0 C341.5,524.1 345.1,520.9 347.9,519.1 C350.7,517.3 351.5,514.7 354.3,515.3 C357.1,515.9 360.9,518.2 364.5,522.9 C368.1,527.6 372.5,535.6 375.9,543.3 C379.3,550.9 381.9,560.1 384.9,568.8 C387.9,577.5 391.5,590.5 393.8,595.5 C396.1,600.5 396.4,598.8 398.9,598.9 C401.4,599.0 405.6,596.3 409.0,596.3 C412.4,596.3 415.4,595.0 419.2,598.9 C423.0,602.8 427.5,614.6 432.0,619.7 C436.5,624.9 442.4,628.8 446.0,629.8 C449.6,630.8 451.1,629.1 453.6,625.7 C456.2,622.3 458.8,614.1 461.3,609.2 C463.9,604.3 466.8,598.7 468.9,596.4 C471.0,594.1 471.9,593.9 474.0,595.2 C476.1,596.5 478.7,598.7 481.7,604.0 C484.7,609.3 488.9,616.8 491.9,627.0 C494.9,637.2 497.0,655.7 499.5,665.2 C502.0,674.8 505.0,680.3 507.1,684.3 C509.2,688.3 510.1,688.1 512.2,689.4 C514.3,690.7 517.4,690.9 519.9,692.0 C522.4,693.1 524.7,697.3 527.0,695.8 C529.3,694.3 531.3,690.2 533.9,683.0 C536.5,675.8 539.6,661.8 542.8,652.5 C546.0,643.2 549.6,634.2 553.0,627.0 C556.4,619.8 559.8,614.7 563.2,609.2 C566.6,603.7 569.6,598.1 573.4,593.9 C577.2,589.6 582.7,586.9 586.1,583.7 C589.5,580.5 591.2,577.3 593.8,574.8 C596.3,572.2 598.9,566.9 601.4,568.4 C603.9,569.9 606.0,577.3 609.0,583.7 C612.0,590.1 615.8,601.1 619.2,606.6 C622.6,612.1 626.4,614.2 629.4,616.8 C632.4,619.3 634.3,621.1 637.1,621.9 C639.9,622.7 643.2,615.5 646.0,621.5 C648.8,627.5 650.8,646.7 653.6,657.6 C656.4,668.5 659.6,684.8 662.6,686.9 C665.6,689.0 668.3,678.6 671.5,670.3 C674.7,662.0 678.3,648.2 681.7,637.2 C685.1,626.2 688.7,612.1 691.9,604.0 C695.1,595.9 698.3,591.5 700.8,588.8 C703.3,586.0 704.9,588.4 707.1,587.5 C709.4,586.6 711.8,582.4 714.3,583.2 C716.8,584.1 719.8,590.5 722.4,592.6 C725.0,594.7 727.1,595.9 730.1,595.9 C733.1,595.9 736.9,594.1 740.3,592.6 C743.7,591.1 746.7,587.5 750.5,586.8 C754.3,586.1 759.4,586.8 763.2,588.3 C767.0,589.8 769.1,593.9 773.4,595.9 C777.6,597.9 784.5,599.3 788.7,600.3 C793.0,601.3 795.5,603.5 798.9,602.0 C802.3,600.5 806.0,594.3 809.0,591.3 C812.0,588.2 813.3,582.0 816.7,583.7 C820.1,585.4 824.5,594.7 829.4,601.5 C834.3,608.3 842.0,621.7 846.0,624.5 C850.0,627.3 850.2,621.1 853.6,618.1 C857.0,615.1 862.1,608.7 866.4,606.6 C870.6,604.5 875.3,606.5 879.1,605.4 C882.9,604.3 885.0,600.6 889.3,600.3 C893.5,600.0 899.9,603.5 904.6,603.6 C909.3,603.7 913.5,599.4 917.3,601.0 C921.1,602.6 924.5,610.1 927.5,613.0 C930.5,615.9 932.7,619.0 935.2,618.1 C937.8,617.2 939.9,611.6 942.8,607.9 C945.7,604.2 949.5,595.0 952.5,595.9 C955.5,596.8 957.6,607.6 960.6,613.0 C963.6,618.4 967.4,625.1 970.8,628.3 C974.2,631.5 977.4,630.5 981.0,632.1 C984.6,633.7 989.1,638.3 992.5,637.7 C995.9,637.1 998.2,630.6 1001.4,628.3 C1004.6,626.0 1007.8,624.2 1011.6,624.0 C1015.4,623.8 1020.3,625.9 1024.3,627.0 C1028.3,628.1 1032.2,631.4 1035.8,630.8 C1039.4,630.2 1042.6,625.4 1046.0,623.2 C1049.4,621.0 1053.3,619.1 1056.3,617.5 C1059.3,615.9 1061.4,617.1 1063.9,613.6 C1066.4,610.1 1068.8,600.8 1071.5,596.4 C1074.2,592.0 1077.2,588.7 1080.1,587.3 C1083.0,585.9 1085.7,587.0 1088.7,587.8 C1091.7,588.6 1095.6,592.8 1098.3,592.2 C1101.0,591.6 1102.8,587.4 1105.0,584.0 C1107.2,580.6 1110.2,573.7 1111.3,571.6" stroke="#1a9dcc" stroke-width="2.3" fill="none" stroke-linejoin="round"/><path d="M47.3,615.5 C47.9,615.7 49.6,618.7 51.1,616.8 C52.6,614.9 54.7,609.1 56.2,604.0 C57.7,598.9 58.3,591.1 60.0,586.2 C61.7,581.3 64.7,578.2 66.4,574.8 C68.1,571.4 69.1,567.7 70.2,565.9 C71.3,564.1 71.7,563.4 72.8,563.8 C73.9,564.2 75.1,565.1 76.6,568.4 C78.1,571.7 80.0,579.5 81.7,583.7 C83.4,588.0 85.3,591.6 86.8,593.9 C88.3,596.2 89.1,594.7 90.6,597.7 C92.1,600.7 94.0,611.2 95.7,611.7 C97.4,612.2 99.1,601.0 100.8,601.0 C102.5,601.0 104.4,608.2 105.9,611.7 C107.4,615.2 108.4,621.3 109.7,621.9 C111.0,622.5 112.0,613.4 113.5,615.5 C115.0,617.6 117.1,627.6 118.6,634.6 C120.1,641.6 120.9,647.8 122.4,657.6 C123.9,667.4 125.8,684.6 127.5,693.2 C129.2,701.8 130.9,707.7 132.6,709.0 C134.3,710.3 136.0,703.9 137.7,700.9 C139.4,697.9 141.7,693.2 142.8,690.7 C143.9,688.2 143.2,687.0 144.1,686.1 C144.9,685.2 146.4,688.2 147.9,685.1 C149.4,682.0 151.3,674.5 153.0,667.8 C154.7,661.1 156.0,653.7 158.1,644.8 C160.2,635.9 163.6,624.5 165.7,614.3 C167.8,604.1 169.3,590.9 170.8,583.7 C172.3,576.5 173.4,573.6 174.7,571.0 C176.0,568.4 177.0,566.2 178.5,567.9 C180.0,569.6 181.9,574.2 183.6,581.1 C185.3,588.0 187.3,603.8 188.7,609.2 C190.0,614.7 190.4,614.4 191.7,613.8 C193.0,613.2 194.7,608.3 196.3,605.4 C197.9,602.5 199.3,598.3 201.4,596.4 C203.5,594.5 206.7,595.5 209.0,593.9 C211.3,592.3 212.8,588.3 215.4,587.0 C218.0,585.7 222.4,586.8 224.3,586.2 C226.2,585.7 225.8,583.1 226.9,583.7 C228.0,584.3 228.6,589.1 230.7,590.0 C232.8,590.9 237.0,589.2 239.6,588.8 C242.2,588.4 244.3,588.3 246.0,587.5 C247.7,586.7 248.5,588.8 249.8,584.0 C251.1,579.2 251.9,568.1 253.6,558.6 C255.3,549.1 258.3,532.9 260.0,526.8 C261.7,520.6 262.4,523.5 263.8,521.7 C265.2,519.9 266.7,514.8 268.4,515.8 C270.1,516.8 272.0,526.6 274.0,528.0 C276.0,529.4 278.5,526.1 280.4,524.2 C282.3,522.3 284.0,516.0 285.5,516.6 C287.0,517.2 287.4,525.5 289.3,528.0 C291.2,530.5 294.0,530.1 297.0,531.8 C300.0,533.5 304.4,536.7 307.1,538.2 C309.9,539.7 311.8,541.2 313.5,540.8 C315.2,540.4 315.8,538.5 317.3,535.7 C318.8,532.9 320.7,526.0 322.4,524.2 C324.1,522.4 325.6,524.7 327.5,524.7 C329.4,524.7 332.2,523.7 333.9,524.2 C335.6,524.7 336.2,528.8 337.7,527.5 C339.2,526.2 340.7,519.9 342.8,516.6 C344.9,513.3 348.4,508.0 350.5,507.6 C352.6,507.2 354.1,511.2 355.6,514.0 C357.1,516.8 357.7,521.0 359.4,524.2 C361.1,527.4 363.8,529.1 365.7,533.1 C367.6,537.1 369.1,544.1 370.8,548.4 C372.5,552.6 373.8,551.0 375.9,558.6 C378.0,566.2 381.1,585.0 383.6,594.3 C386.2,603.6 389.3,611.6 391.2,614.6 C393.1,617.6 393.3,615.7 395.0,612.1 C396.7,608.5 399.5,595.1 401.4,593.0 C403.3,590.9 404.8,598.9 406.5,599.4 C408.2,599.9 409.5,595.4 411.6,596.3 C413.7,597.1 417.1,600.0 419.2,604.5 C421.3,609.0 423.0,620.2 424.3,623.6 C425.6,627.0 425.8,623.2 426.9,624.8 C428.0,626.4 429.2,632.6 430.7,633.0 C432.2,633.4 433.9,627.3 435.8,627.4 C437.7,627.5 440.5,632.3 442.2,633.8 C443.9,635.3 444.5,637.4 446.0,636.3 C447.5,635.2 449.4,630.7 451.1,627.0 C452.8,623.3 454.7,619.4 456.2,614.3 C457.7,609.2 458.7,602.0 460.0,596.4 C461.3,590.8 462.5,582.7 463.8,580.6 C465.1,578.5 465.6,580.2 467.7,583.7 C469.8,587.2 474.3,595.5 476.6,601.5 C478.9,607.5 479.4,612.2 481.7,619.4 C484.0,626.6 488.7,635.0 490.6,644.8 C492.5,654.6 492.0,669.3 493.1,678.0 C494.2,686.7 495.5,693.6 497.0,697.0 C498.5,700.4 500.3,697.6 502.0,698.3 C503.7,698.9 505.2,701.8 507.1,700.9 C509.0,700.0 511.4,694.3 513.5,693.2 C515.6,692.1 518.2,693.1 519.9,694.5 C521.6,695.9 522.2,702.0 523.7,701.4 C525.2,700.8 526.9,699.3 528.8,690.7 C530.7,682.1 532.7,662.6 535.2,649.9 C537.8,637.2 542.0,620.6 544.1,614.3 C546.2,608.0 546.4,613.4 547.9,612.2 C549.4,611.0 551.3,608.5 553.0,607.1 C554.7,605.7 556.4,606.6 558.1,604.0 C559.8,601.4 561.5,594.5 563.2,591.3 C564.9,588.1 566.2,586.7 568.3,585.0 C570.4,583.3 573.3,582.6 575.9,581.1 C578.5,579.6 581.0,577.9 583.6,576.0 C586.2,574.1 589.1,572.0 591.2,569.7 C593.3,567.4 594.8,563.5 596.3,562.0 C597.8,560.5 598.6,557.6 600.1,560.8 C601.6,564.0 603.5,573.9 605.2,581.1 C606.9,588.3 608.8,597.0 610.3,604.0 C611.8,611.0 612.7,620.2 614.2,623.2 C615.7,626.2 617.5,621.9 619.2,621.9 C620.9,621.9 621.3,622.8 624.3,623.2 C627.3,623.6 634.1,625.8 637.1,624.5 C640.1,623.2 640.9,615.4 642.2,615.5 C643.5,615.6 644.0,618.8 645.0,625.0 C646.0,631.2 647.5,639.9 648.5,652.5 C649.5,665.1 650.2,692.4 651.1,700.9 C652.0,709.4 652.7,701.3 653.6,703.4 C654.5,705.5 655.6,713.6 656.7,713.6 C657.8,713.6 658.4,709.8 660.0,703.4 C661.6,697.0 664.9,680.5 666.4,675.4 C667.9,670.3 667.6,677.6 668.9,672.9 C670.2,668.2 672.3,654.6 674.0,647.4 C675.7,640.2 677.0,638.1 679.1,629.6 C681.2,621.1 684.9,604.5 686.8,596.4 C688.7,588.3 689.3,584.1 690.6,581.1 C691.9,578.1 692.7,579.0 694.4,578.1 C696.1,577.2 698.9,574.2 700.8,576.0 C702.7,577.8 704.4,587.9 705.9,588.8 C707.4,589.6 708.4,583.1 709.7,581.1 C711.0,579.1 711.8,573.0 713.5,576.6 C715.2,580.2 718.0,598.6 719.9,602.8 C721.8,607.0 723.1,603.5 725.0,602.0 C726.9,600.5 728.6,596.2 731.4,593.9 C734.1,591.6 738.8,590.2 741.5,588.3 C744.2,586.4 745.1,581.9 747.9,582.4 C750.7,582.9 755.5,591.1 758.1,591.3 C760.7,591.5 761.5,582.0 763.2,583.7 C764.9,585.4 765.8,599.0 768.3,601.5 C770.8,604.0 775.7,598.1 778.5,598.5 C781.3,598.9 782.6,603.1 784.9,604.0 C787.2,604.9 789.8,604.8 792.5,604.0 C795.2,603.2 799.3,602.0 801.4,599.0 C803.5,596.0 803.7,590.2 805.2,586.2 C806.7,582.2 808.4,576.1 810.3,574.8 C812.2,573.5 814.8,574.6 816.7,578.6 C818.6,582.6 819.7,593.0 821.8,599.0 C823.9,605.0 827.1,609.4 829.4,614.3 C831.7,619.2 833.2,625.1 835.8,628.3 C838.3,631.5 842.2,635.3 844.7,633.4 C847.2,631.5 849.2,621.0 851.1,616.8 C853.0,612.5 854.1,611.1 856.2,607.9 C858.3,604.7 861.7,598.1 863.8,597.7 C865.9,597.3 867.4,604.4 868.9,605.4 C870.4,606.4 871.1,604.1 872.8,604.0 C874.5,603.9 877.2,606.0 879.1,604.6 C881.0,603.2 882.3,596.8 884.2,595.9 C886.1,595.0 888.5,597.7 890.6,599.0 C892.7,600.3 894.9,602.2 897.0,603.6 C899.1,605.0 901.0,607.9 903.3,607.1 C905.6,606.3 908.9,600.3 911.0,599.0 C913.1,597.7 914.1,597.0 916.0,599.5 C917.9,602.0 920.3,609.3 922.4,614.3 C924.5,619.3 926.5,629.4 928.8,629.6 C931.1,629.8 934.1,621.2 936.4,615.5 C938.7,609.8 940.5,600.6 942.8,595.2 C945.1,589.8 948.3,583.4 950.0,583.2 C951.7,583.0 951.6,587.5 953.0,593.9 C954.4,600.3 955.8,614.3 958.1,621.9 C960.4,629.5 964.7,637.4 967.0,639.7 C969.3,642.0 970.6,637.5 972.1,635.9 C973.6,634.3 974.7,630.4 976.0,629.9 C977.3,629.4 978.4,631.3 979.8,632.7 C981.2,634.1 983.2,636.6 984.6,638.5 C986.0,640.4 987.0,644.4 988.4,644.2 C989.8,644.0 991.5,641.5 993.2,637.5 C995.0,633.5 997.0,623.2 998.9,620.3 C1000.8,617.4 1002.8,620.1 1004.7,620.3 C1006.6,620.5 1008.5,620.0 1010.4,621.7 C1012.3,623.4 1014.2,629.3 1016.1,630.5 C1018.0,631.7 1020.0,629.0 1021.9,628.9 C1023.8,628.8 1026.0,629.2 1027.6,629.9 C1029.2,630.6 1030.0,633.0 1031.4,633.1 C1032.8,633.2 1034.1,633.2 1036.2,630.5 C1038.3,627.8 1041.6,619.6 1043.8,617.1 C1046.0,614.6 1048.2,616.1 1049.6,615.5 C1051.0,614.9 1051.5,613.4 1052.4,613.3 C1053.4,613.2 1053.9,615.3 1055.3,615.0 C1056.7,614.7 1059.2,614.2 1061.0,611.7 C1062.8,609.2 1064.4,605.7 1065.8,600.3 C1067.2,594.9 1068.2,583.1 1069.6,579.2 C1071.0,575.3 1072.8,576.5 1074.4,576.8 C1076.0,577.1 1077.6,579.9 1079.2,581.2 C1080.8,582.5 1082.9,583.2 1084.0,584.6 C1085.1,586.0 1085.1,588.9 1085.9,589.7 C1086.7,590.6 1087.4,588.4 1088.7,589.7 C1090.0,591.0 1091.9,596.4 1093.5,597.4 C1095.1,598.4 1096.5,599.8 1098.3,595.5 C1100.0,591.2 1102.4,577.5 1104.0,571.6 C1105.6,565.7 1106.7,563.9 1107.9,560.1 C1109.1,556.3 1110.7,550.6 1111.3,548.7" stroke="#111" stroke-width="2.3" fill="none" stroke-linejoin="round"/><rect x="47" y="486" width="1070" height="2" fill="#aaaaaa"/><rect x="46" y="731.5" width="1072" height="1.5" fill="#d8d8d8"/><rect x="1116.5" y="0" width="1.5" height="733" fill="#d8d8d8"/><rect x="45" y="0" width="1" height="785" fill="#d8d8d8"/><rect x="46" y="759" width="1116" height="1" fill="#dcdcdc"/><rect x="1092" y="762" width="1" height="23" fill="#dcdcdc"/><path d="M62.6,16.7 C65.5,11.5 72.5,11.5 75.4,16.7 C72.5,21.9 65.5,21.9 62.6,16.7 Z" fill="none" stroke="#111" stroke-width="1.2"/><circle cx="69.0" cy="17.2" r="3.2" fill="#111"/><circle cx="67.7" cy="18.3" r="0.9" fill="#fff"/><circle cx="81.7" cy="14.4" r="1.1" fill="#111"/><circle cx="85.7" cy="14.4" r="1.1" fill="#111"/><circle cx="89.7" cy="14.4" r="1.1" fill="#111"/><rect x="94" y="7" width="4" height="16" fill="#000"/><text x="102.5" y="20.8" font-family="'Liberation Sans', sans-serif" font-size="12.4" fill="#111" font-weight="bold" text-anchor="start" >XLRE</text><text x="138.5" y="20.8" font-family="'Liberation Sans', sans-serif" font-size="13" fill="#333" font-weight="normal" text-anchor="start" textLength="25.5" lengthAdjust="spacingAndGlyphs">·1D·</text><path d="M174.8,14.2L183.0,22.4M183.0,14.2L174.8,22.4" stroke="#111" stroke-width="1.3" fill="none"/><path d="M189.7,16.6 C192.6,11.4 199.6,11.4 202.5,16.6 C199.6,21.8 192.6,21.8 189.7,16.6 Z" fill="none" stroke="#111" stroke-width="1.2"/><circle cx="196.1" cy="17.1" r="3.2" fill="#111"/><circle cx="194.8" cy="18.2" r="0.9" fill="#fff"/><circle cx="208.8" cy="14.4" r="1.1" fill="#111"/><circle cx="212.8" cy="14.4" r="1.1" fill="#111"/><circle cx="216.8" cy="14.4" r="1.1" fill="#111"/><rect x="221.0" y="7" width="4" height="16" fill="#f8dc6e"/><text x="229.8" y="20.8" font-family="'Liberation Sans', sans-serif" font-size="13" fill="#111" font-weight="bold" text-anchor="start" textLength="128.3" lengthAdjust="spacingAndGlyphs">DEMA (150, Close, 0)</text><path d="M369.6,14.2L377.8,22.4M377.8,14.2L369.6,22.4" stroke="#111" stroke-width="1.3" fill="none"/><path d="M384.5,16.6 C387.4,11.4 394.4,11.4 397.3,16.6 C394.4,21.8 387.4,21.8 384.5,16.6 Z" fill="none" stroke="#111" stroke-width="1.2"/><circle cx="390.9" cy="17.1" r="3.2" fill="#111"/><circle cx="389.6" cy="18.2" r="0.9" fill="#fff"/><circle cx="403.6" cy="14.4" r="1.1" fill="#111"/><circle cx="407.6" cy="14.4" r="1.1" fill="#111"/><circle cx="411.6" cy="14.4" r="1.1" fill="#111"/><rect x="416.0" y="7" width="4" height="16" fill="#f2333f"/><text x="424.8" y="20.8" font-family="'Liberation Sans', sans-serif" font-size="13" fill="#111" font-weight="bold" text-anchor="start" textLength="121.0" lengthAdjust="spacingAndGlyphs">DEMA (20, Close, 0)</text><path d="M555.3,14.2L563.5,22.4M563.5,14.2L555.3,22.4" stroke="#111" stroke-width="1.3" fill="none"/><path d="M570.2,16.6 C573.1,11.4 580.1,11.4 583.0,16.6 C580.1,21.8 573.1,21.8 570.2,16.6 Z" fill="none" stroke="#111" stroke-width="1.2"/><circle cx="576.6" cy="17.1" r="3.2" fill="#111"/><circle cx="575.3" cy="18.2" r="0.9" fill="#fff"/><circle cx="589.3" cy="14.4" r="1.1" fill="#111"/><circle cx="593.3" cy="14.4" r="1.1" fill="#111"/><circle cx="597.3" cy="14.4" r="1.1" fill="#111"/><rect x="602.0" y="7" width="4" height="16" fill="#0f8b2f"/><text x="610.8" y="20.8" font-family="'Liberation Sans', sans-serif" font-size="13" fill="#111" font-weight="bold" text-anchor="start" textLength="120.0" lengthAdjust="spacingAndGlyphs">DEMA (50, Close, 0)</text><path d="M1102,14.2L1105,17.2L1108,14.2" stroke="#444" stroke-width="1.2" fill="none"/><path d="M64.9,504.9L73.1,513.1M73.1,504.9L64.9,513.1" stroke="#111" stroke-width="1.3" fill="none"/><path d="M79.6,507.4 C82.5,502.2 89.5,502.2 92.4,507.4 C89.5,512.6 82.5,512.6 79.6,507.4 Z" fill="none" stroke="#111" stroke-width="1.2"/><circle cx="86.0" cy="507.9" r="3.2" fill="#111"/><circle cx="84.7" cy="509.0" r="0.9" fill="#fff"/><circle cx="98.0" cy="505.6" r="1.1" fill="#111"/><circle cx="102.0" cy="505.6" r="1.1" fill="#111"/><circle cx="106.0" cy="505.6" r="1.1" fill="#111"/><rect x="111" y="498" width="4" height="17" fill="#000"/><rect x="117" y="498" width="4" height="17" fill="#1a9dcc"/><text x="125.8" y="511.8" font-family="'Liberation Sans', sans-serif" font-size="13" fill="#111" font-weight="bold" text-anchor="start" textLength="89.5" lengthAdjust="spacingAndGlyphs">PPO (12, 26, 9)</text><path d="M1102,509L1105,506L1108,509" stroke="#444" stroke-width="1.2" fill="none"/><text x="1156.0" y="28.9" font-family="'Liberation Sans', sans-serif" font-size="11.2" fill="#666" font-weight="normal" text-anchor="end" >44.00</text><text x="1156.0" y="68.9" font-family="'Liberation Sans', sans-serif" font-size="11.2" fill="#666" font-weight="normal" text-anchor="end" >43.00</text><text x="1156.0" y="108.9" font-family="'Liberation Sans', sans-serif" font-size="11.2" fill="#666" font-weight="normal" text-anchor="end" >42.00</text><text x="1156.0" y="148.9" font-family="'Liberation Sans', sans-serif" font-size="11.2" fill="#666" font-weight="normal" text-anchor="end" >41.00</text><text x="1156.0" y="188.9" font-family="'Liberation Sans', sans-serif" font-size="11.2" fill="#666" font-weight="normal" text-anchor="end" >40.00</text><text x="1156.0" y="228.9" font-family="'Liberation Sans', sans-serif" font-size="11.2" fill="#666" font-weight="normal" text-anchor="end" >39.00</text><text x="1156.0" y="268.9" font-family="'Liberation Sans', sans-serif" font-size="11.2" fill="#666" font-weight="normal" text-anchor="end" >38.00</text><text x="1156.0" y="308.9" font-family="'Liberation Sans', sans-serif" font-size="11.2" fill="#666" font-weight="normal" text-anchor="end" >37.00</text><text x="1156.0" y="348.9" font-family="'Liberation Sans', sans-serif" font-size="11.2" fill="#666" font-weight="normal" text-anchor="end" >36.00</text><text x="1156.0" y="388.9" font-family="'Liberation Sans', sans-serif" font-size="11.2" fill="#666" font-weight="normal" text-anchor="end" >35.00</text><text x="1156.0" y="428.9" font-family="'Liberation Sans', sans-serif" font-size="11.2" fill="#666" font-weight="normal" text-anchor="end" >34.00</text><text x="1156.0" y="468.9" font-family="'Liberation Sans', sans-serif" font-size="11.2" fill="#666" font-weight="normal" text-anchor="end" >33.00</text><text x="1150.0" y="519.9" font-family="'Liberation Sans', sans-serif" font-size="11.2" fill="#666" font-weight="normal" text-anchor="end" >2.00</text><text x="1150.0" y="568.0" font-family="'Liberation Sans', sans-serif" font-size="11.2" fill="#666" font-weight="normal" text-anchor="end" >1.00</text><text x="1150.0" y="616.2" font-family="'Liberation Sans', sans-serif" font-size="11.2" fill="#666" font-weight="normal" text-anchor="end" >0.00</text><text x="1150.0" y="664.4" font-family="'Liberation Sans', sans-serif" font-size="11.2" fill="#666" font-weight="normal" text-anchor="end" >-1.00</text><text x="1150.0" y="712.5" font-family="'Liberation Sans', sans-serif" font-size="11.2" fill="#666" font-weight="normal" text-anchor="end" >-2.00</text><rect x="1116.5" y="32.0" width="43.8" height="19.5" fill="#000"/><text x="1155.5" y="45.8" font-family="'Liberation Sans', sans-serif" font-size="11.5" fill="#fff" font-weight="bold" text-anchor="end" >43.59</text><rect x="1116.5" y="73.6" width="43.8" height="19.5" fill="#f2333f"/><text x="1155.5" y="87.4" font-family="'Liberation Sans', sans-serif" font-size="11.5" fill="#fff" font-weight="bold" text-anchor="end" >42.55</text><rect x="1116.5" y="105.2" width="43.8" height="19.5" fill="#0f8b2f"/><text x="1155.5" y="119.0" font-family="'Liberation Sans', sans-serif" font-size="11.5" fill="#fff" font-weight="bold" text-anchor="end" >41.75</text><rect x="1116.5" y="124.0" width="43.8" height="19.5" fill="#f8dc6e"/><text x="1155.5" y="137.8" font-family="'Liberation Sans', sans-serif" font-size="11.5" fill="#111" font-weight="bold" text-anchor="end" >41.30</text><rect x="1116.5" y="538.8" width="37.5" height="19.5" fill="#000"/><text x="1149.2" y="552.6" font-family="'Liberation Sans', sans-serif" font-size="11.5" fill="#fff" font-weight="bold" text-anchor="end" >1.33</text><rect x="1116.5" y="562.0" width="37.5" height="19.5" fill="#1a9dcc"/><text x="1149.2" y="575.8" font-family="'Liberation Sans', sans-serif" font-size="11.5" fill="#fff" font-weight="bold" text-anchor="end" >0.85</text><clipPath id="tclip"><rect x="46.5" y="736" width="1100" height="20"/></clipPath><g clip-path="url(#tclip)"><text x="58.5" y="748.8" font-family="'Liberation Sans', sans-serif" font-size="11.5" fill="#666" font-weight="normal" text-anchor="middle" >Mar '24</text><text x="148.5" y="748.8" font-family="'Liberation Sans', sans-serif" font-size="11.5" fill="#666" font-weight="normal" text-anchor="middle" >May '24</text><text x="237.5" y="748.8" font-family="'Liberation Sans', sans-serif" font-size="11.5" fill="#666" font-weight="normal" text-anchor="middle" >Jul '24</text><text x="331.5" y="748.8" font-family="'Liberation Sans', sans-serif" font-size="11.5" fill="#666" font-weight="normal" text-anchor="middle" >Sep '24</text><text x="423.5" y="748.8" font-family="'Liberation Sans', sans-serif" font-size="11.5" fill="#666" font-weight="normal" text-anchor="middle" >Nov '24</text><text x="511.5" y="748.8" font-family="'Liberation Sans', sans-serif" font-size="11.5" fill="#666" font-weight="normal" text-anchor="middle" >Jan '25</text><text x="595.5" y="748.8" font-family="'Liberation Sans', sans-serif" font-size="11.5" fill="#666" font-weight="normal" text-anchor="middle" >Mar '25</text><text x="685.5" y="748.8" font-family="'Liberation Sans', sans-serif" font-size="11.5" fill="#666" font-weight="normal" text-anchor="middle" >May '25</text><text x="773.5" y="748.8" font-family="'Liberation Sans', sans-serif" font-size="11.5" fill="#666" font-weight="normal" text-anchor="middle" >Jul '25</text><text x="866.5" y="748.8" font-family="'Liberation Sans', sans-serif" font-size="11.5" fill="#666" font-weight="normal" text-anchor="middle" >Sep '25</text><text x="960.5" y="748.8" font-family="'Liberation Sans', sans-serif" font-size="11.5" fill="#666" font-weight="normal" text-anchor="middle" >Nov '25</text><text x="1048.5" y="748.8" font-family="'Liberation Sans', sans-serif" font-size="11.5" fill="#666" font-weight="normal" text-anchor="middle" >Jan '26</text></g><text x="65.4" y="778.8" font-family="'Liberation Sans', sans-serif" font-size="13" fill="#222" font-weight="normal" text-anchor="start" textLength="16.6" lengthAdjust="spacingAndGlyphs">1D</text><text x="97.8" y="778.8" font-family="'Liberation Sans', sans-serif" font-size="13" fill="#222" font-weight="normal" text-anchor="start" textLength="16.2" lengthAdjust="spacingAndGlyphs">5D</text><text x="130.5" y="778.8" font-family="'Liberation Sans', sans-serif" font-size="13" fill="#222" font-weight="normal" text-anchor="start" textLength="18.1" lengthAdjust="spacingAndGlyphs">1M</text><text x="164.7" y="778.8" font-family="'Liberation Sans', sans-serif" font-size="13" fill="#222" font-weight="normal" text-anchor="start" textLength="18.8" lengthAdjust="spacingAndGlyphs">2M</text><text x="199.4" y="778.8" font-family="'Liberation Sans', sans-serif" font-size="13" fill="#222" font-weight="normal" text-anchor="start" textLength="19.0" lengthAdjust="spacingAndGlyphs">3M</text><text x="233.8" y="778.8" font-family="'Liberation Sans', sans-serif" font-size="13" fill="#222" font-weight="normal" text-anchor="start" textLength="19.2" lengthAdjust="spacingAndGlyphs">6M</text><text x="268.5" y="778.8" font-family="'Liberation Sans', sans-serif" font-size="13" fill="#222" font-weight="normal" text-anchor="start" textLength="18.7" lengthAdjust="spacingAndGlyphs">9M</text><text x="303.7" y="778.8" font-family="'Liberation Sans', sans-serif" font-size="13" fill="#222" font-weight="normal" text-anchor="start" textLength="15.8" lengthAdjust="spacingAndGlyphs">1Y</text><text x="334.0" y="778.8" font-family="'Liberation Sans', sans-serif" font-size="13" fill="#1f6fc5" font-weight="bold" text-anchor="start" textLength="15.3" lengthAdjust="spacingAndGlyphs">2Y</text><text x="365.3" y="778.8" font-family="'Liberation Sans', sans-serif" font-size="13" fill="#222" font-weight="normal" text-anchor="start" textLength="15.7" lengthAdjust="spacingAndGlyphs">3Y</text><text x="396.4" y="778.8" font-family="'Liberation Sans', sans-serif" font-size="13" fill="#222" font-weight="normal" text-anchor="start" textLength="15.3" lengthAdjust="spacingAndGlyphs">5Y</text><text x="427.7" y="778.8" font-family="'Liberation Sans', sans-serif" font-size="13" fill="#222" font-weight="normal" text-anchor="start" textLength="22.1" lengthAdjust="spacingAndGlyphs">10Y</text><text x="465.4" y="778.8" font-family="'Liberation Sans', sans-serif" font-size="13" fill="#222" font-weight="normal" text-anchor="start" textLength="22.9" lengthAdjust="spacingAndGlyphs">20Y</text><text x="504.4" y="778.8" font-family="'Liberation Sans', sans-serif" font-size="13" fill="#222" font-weight="normal" text-anchor="start" textLength="24.2" lengthAdjust="spacingAndGlyphs">Max</text><rect x="548" y="769" width="11.2" height="11" fill="none" stroke="#333" stroke-width="1.3"/><path d="M548,773.3H559.2M551.3,767.5V770M555.9,767.5V770" stroke="#333" stroke-width="1.3"/><path d="M1070,770L1073.5,773.5L1077,770M1070,774.5L1073.5,778L1077,774.5" stroke="#333" stroke-width="1.3" fill="none"/><text x="1104.2" y="778.8" font-family="'Liberation Sans', sans-serif" font-size="13" fill="#222" font-weight="normal" text-anchor="start" textLength="10.3" lengthAdjust="spacingAndGlyphs">%</text><text x="1134.0" y="778.8" font-family="'Liberation Sans', sans-serif" font-size="13" fill="#222" font-weight="normal" text-anchor="start" textLength="16.6" lengthAdjust="spacingAndGlyphs">log</text><path d="M16.4,16.5H22M27,16.5H31.7" stroke="#222" stroke-width="1.3" fill="none"/><path d="M24.5,14.1L26.8,16.5L24.5,18.9L22.2,16.5Z" stroke="#222" stroke-width="1.3" fill="none"/><path d="M39.2,12.2L42.8,15.8L39.2,19.4" stroke="#888" stroke-width="1" fill="none"/><circle cx="20" cy="41" r="2" stroke="#222" stroke-width="1.3" fill="none"/><circle cx="17.6" cy="51.9" r="2" stroke="#222" stroke-width="1.3" fill="none"/><path d="M19.4,42.9L18.2,50" stroke="#222" stroke-width="1.3" fill="none"/><path d="M22.2,41H33.6M23.3,44.4H33.6M23.3,48.1H33.6M23.3,51.8H33.6" stroke="#555" stroke-width="1.4"/><path d="M39.2,41.8L42.8,45.4L39.2,49.0" stroke="#888" stroke-width="1" fill="none"/><path d="M24.3,70.3 Q29.5,71.5 31.3,76.3 Q29.5,81 24.3,82.5 Q19,81 17,76.3 Q19,71.5 24.3,70.3Z" stroke="#222" stroke-width="1.3" fill="none"/><circle cx="24.3" cy="70.3" r="1.9" fill="#fff" stroke="#222" stroke-width="1.2"/><circle cx="17.0" cy="76.3" r="1.9" fill="#fff" stroke="#222" stroke-width="1.2"/><circle cx="31.3" cy="76.3" r="1.9" fill="#fff" stroke="#222" stroke-width="1.2"/><circle cx="24.3" cy="82.5" r="1.9" fill="#fff" stroke="#222" stroke-width="1.2"/><path d="M39.2,72.2L42.8,75.8L39.2,79.4" stroke="#888" stroke-width="1" fill="none"/><path d="M21.6,100H27.2V105.5H30.6L24.4,113.5L18.2,105.5H21.6Z" stroke="#222" stroke-width="1.3" fill="none"/><path d="M39.2,102.0L42.8,105.6L39.2,109.2" stroke="#888" stroke-width="1" fill="none"/><circle cx="24.5" cy="136.3" r="8.2" stroke="#222" stroke-width="1.3" fill="none"/><text x="24.5" y="140.6" font-family="'Liberation Sans', sans-serif" font-size="11.5" fill="#222" font-weight="normal" text-anchor="middle" >1</text><path d="M39.2,132.3L42.8,135.9L39.2,139.5" stroke="#888" stroke-width="1" fill="none"/><path d="M18.1,158.2V170.8M30.6,161.8V174.7M19.5,165.5H28.6M26,163L28.6,165.5L26,168" stroke="#222" stroke-width="1.3" fill="none"/><circle cx="18.1" cy="172.6" r="1.8" stroke="#222" stroke-width="1.3" fill="none"/><circle cx="30.6" cy="159.9" r="1.8" stroke="#222" stroke-width="1.3" fill="none"/><path d="M39.2,162.3L42.8,165.9L39.2,169.5" stroke="#888" stroke-width="1" fill="none"/><rect x="4" y="185.0" width="41" height="1" fill="#d8d8d8"/><rect x="4" y="313.0" width="41" height="1" fill="#d8d8d8"/><rect x="4" y="412.0" width="41" height="1" fill="#d8d8d8"/><path d="M16.6,213 V203.5 A7.7,7.7 0 0 1 32.1,203.5 V213 H27.2 V204 A2.9,2.9 0 0 0 21.5,204 V213 Z" stroke="#444" stroke-width="1.2" fill="none"/><path d="M16.6,208.4H21.5M27.2,208.4H32.1" stroke="#444" stroke-width="1.2"/><rect x="17.2" y="208.8" width="3.8" height="3.8" fill="#bbb"/><rect x="27.7" y="208.8" width="3.8" height="3.8" fill="#bbb"/><rect x="17.4" y="233.3" width="14.4" height="9.2" stroke="#111" stroke-width="1.4" fill="none"/><path d="M20.4,233.3V230 A3.9,3.9 0 0 1 28.3,229.8" stroke="#111" stroke-width="1.4" fill="none"/><path d="M17.5,266.5 A7.2,7.2 0 1 0 20.3,258" stroke="#b8b8b8" stroke-width="1.4" fill="none"/><path d="M15.6,257.6V263.3H21" stroke="#b8b8b8" stroke-width="1.4" fill="none"/><path d="M30.7,291.5 A7.2,7.2 0 1 1 27.9,288" stroke="#b8b8b8" stroke-width="1.4" fill="none"/><path d="M33.4,287.6V293.2H28" stroke="#b8b8b8" stroke-width="1.4" fill="none"/><path d="M16.3,328.5H31.8M21,328.5V326.4Q21,325.2 22.3,325.2H26.5Q27.8,325.2 27.8,326.4V328.5M18.7,328.5V339.8Q18.7,341.3 20.2,341.3H29Q30.5,341.3 30.5,339.8V328.5" stroke="#222" stroke-width="1.4" fill="none"/><circle cx="23.8" cy="362.7" r="6.2" stroke="#222" stroke-width="1.3" fill="none"/><path d="M28.3,367.3L31.8,370.9M21,362.7H26.6M23.8,359.9V365.5" stroke="#222" stroke-width="1.3" fill="none"/><circle cx="23.8" cy="392.6" r="6.2" stroke="#222" stroke-width="1.3" fill="none"/><path d="M28.3,397.2L31.8,400.8M20.6,392.6H27" stroke="#222" stroke-width="1.3" fill="none"/><path d="M23.5,427L19,431.3L23.5,435.6M29.8,427L25.3,431.3L29.8,435.6" stroke="#222" stroke-width="1.4" fill="none"/></svg>
</body></html>
